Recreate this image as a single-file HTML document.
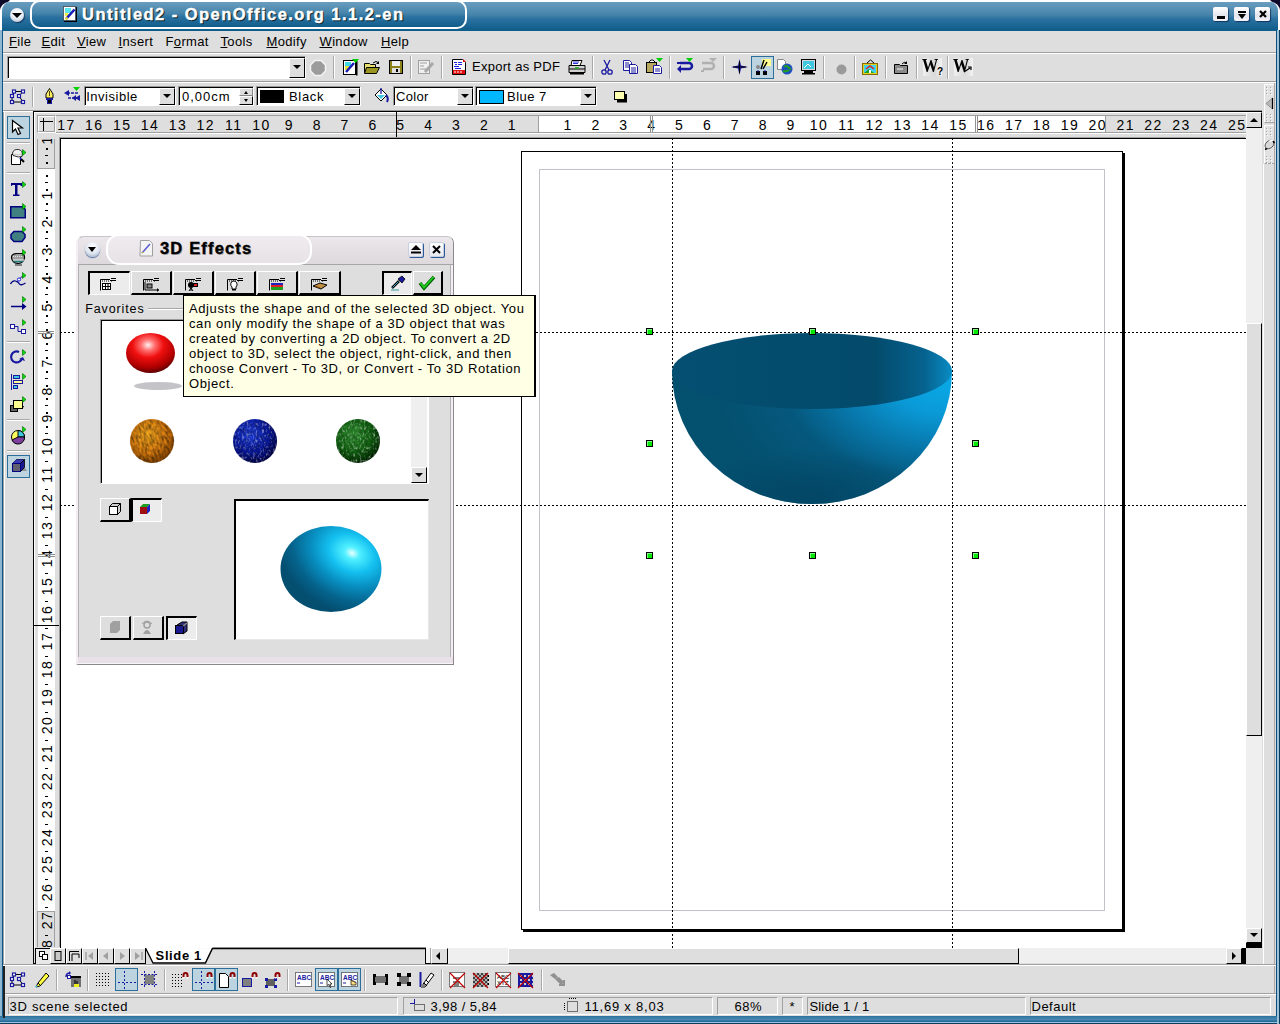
<!DOCTYPE html>
<html><head><meta charset="utf-8">
<style>
*{margin:0;padding:0;box-sizing:border-box}
html,body{width:1280px;height:1024px;overflow:hidden;background:#dedede;font-family:"Liberation Sans",sans-serif;font-size:13px;color:#000}
.a{position:absolute}
.t{position:absolute;white-space:nowrap;line-height:1}
svg{position:absolute;overflow:visible}
.sep{position:absolute;width:2px;border-left:1px solid #a9a9a9;border-right:1px solid #fff}
.combo{position:absolute;background:#fff;border-top:2px solid #000;border-left:2px solid #000;border-right:1px solid #fff;border-bottom:1px solid #fff}
.ddb{position:absolute;background:#dedede;border-top:1px solid #fff;border-left:1px solid #fff;border-right:1px solid #000;border-bottom:1px solid #000}
.ddb:after{content:"";position:absolute;left:50%;top:50%;margin-left:-5px;margin-top:-2px;border-left:5px solid transparent;border-right:5px solid transparent;border-top:5px solid #000}
.handle{position:absolute;width:7px;height:7px;background:#22c022;border:1px solid #000}
</style></head><body>
<!-- desktop corners -->
<div class="a" style="left:0;top:0;width:1280px;height:2px;background:#fff"></div>
<div class="a" style="left:0;top:0;width:10px;height:10px;background:#100a2a;clip-path:polygon(0 0,100% 0,0 100%)"></div>
<div class="a" style="left:1270px;top:0;width:10px;height:10px;background:#100a2a;clip-path:polygon(0 0,100% 0,100% 100%)"></div>
<!-- window frame -->
<div class="a" style="left:0;top:2px;width:1280px;height:1022px;background:linear-gradient(#6a9dbf,#4584ab 13px,#2a71a0 17px,#0f5d8b 28px,#0f5d8b 29px);border-radius:9px 9px 0 0;border-left:2px solid #fff;border-right:2px solid #fff"></div>
<div class="a" style="left:0;top:30px;width:3px;height:994px;background:linear-gradient(90deg,#93b9d4 0,#8ab3cf 2px,#0e5a86 2px)"></div>
<div class="a" style="left:1276px;top:30px;width:4px;height:994px;background:linear-gradient(90deg,#0d4f7a 0,#0d4f7a 1px,#9fc2db 1px,#9fc2db 3px,#0a3d5e 3px)"></div>
<div class="a" style="left:0;top:1016px;width:1277px;height:8px;background:linear-gradient(#2a6f9c,#4a8ab4 40%,#1b6494 75%,#9fc2db 75%,#9fc2db 87%,#0a3d5e 87%)"></div>
<!-- client bg -->
<div class="a" style="left:3px;top:31px;width:1273px;height:985px;background:#dedede"></div>

<!-- TITLE -->
<div id="title">
<div class="a" style="left:30px;top:0px;width:437px;height:29px;border:2px solid #fff;border-radius:10px;background:linear-gradient(#6a9dbf,#4584ab 45%,#2a71a0 60%,#0f5d8b)"></div>
<div class="a" style="left:10px;top:8px;width:14px;height:14px;border-radius:50%;background:radial-gradient(circle at 50% 35%,#fff,#e8ecf4 50%,#aeb8c8);box-shadow:1px 1px 1px rgba(0,0,40,.5)"></div>
<div class="a" style="left:12px;top:13px;width:0;height:0;border-left:5px solid transparent;border-right:5px solid transparent;border-top:5px solid #000"></div>
<svg style="left:63px;top:6px" width="14" height="16" viewBox="0 0 14 16"><rect x="0.5" y="0.5" width="12" height="14" fill="#fff" stroke="#000" stroke-dasharray="1 1"/><rect x="13" y="1" width="1" height="15" fill="#000"/><rect x="1" y="15" width="13" height="1" fill="#000"/><rect x="2" y="2" width="6" height="5" fill="#60e8f0"/><rect x="2" y="7" width="3" height="3" fill="#f0f040"/><path d="M3 13L11.5 3.5" stroke="#1a1ab8" stroke-width="2.6"/><path d="M2.5 13.5l2-2" stroke="#f0e020" stroke-width="2"/></svg>
<div class="t" style="left:83px;top:7px;font-size:16.5px;font-weight:bold;color:#000;letter-spacing:1.46px;opacity:.7;-webkit-text-stroke:0.4px #000">Untitled2 - OpenOffice.org 1.1.2-en</div>
<div class="t" style="left:82px;top:6px;font-size:16.5px;font-weight:bold;color:#fff;letter-spacing:1.46px;-webkit-text-stroke:0.4px #fff">Untitled2 - OpenOffice.org 1.1.2-en</div>
<!-- buttons -->
<div class="a" style="left:1213px;top:7px;width:15px;height:14px;border-radius:2px;background:linear-gradient(#fff,#e4e6ee 60%,#f4f4f8);box-shadow:1px 1px 1px rgba(0,20,60,.6)"></div>
<div class="a" style="left:1217px;top:16px;width:8px;height:3px;background:#000"></div>
<div class="a" style="left:1234px;top:7px;width:15px;height:14px;border-radius:2px;background:linear-gradient(#fff,#e4e6ee 60%,#f4f4f8);box-shadow:1px 1px 1px rgba(0,20,60,.6)"></div>
<div class="a" style="left:1238px;top:11px;width:8px;height:2px;background:#000"></div>
<div class="a" style="left:1238px;top:14px;width:0;height:0;border-left:4px solid transparent;border-right:4px solid transparent;border-top:5px solid #000"></div>
<div class="a" style="left:1255px;top:7px;width:15px;height:14px;border-radius:2px;background:linear-gradient(#fff,#e4e6ee 60%,#f4f4f8);box-shadow:1px 1px 1px rgba(0,20,60,.6)"></div>
<svg style="left:1259px;top:10px" width="8" height="8"><path d="M1 1L7 7M7 1L1 7" stroke="#000" stroke-width="2.2"/></svg>
</div>

<!-- MENU -->
<div id="menu">
<div class="a" style="left:3px;top:52px;width:1273px;height:1px;background:#a0a0a0"></div>
<div class="a" style="left:3px;top:53px;width:1273px;height:1px;background:#fff"></div>
<div class="t" style="left:9px;top:35px;letter-spacing:0.35px"><u>F</u>ile</div>
<div class="t" style="left:41.5px;top:35px;letter-spacing:0.35px"><u>E</u>dit</div>
<div class="t" style="left:77px;top:35px;letter-spacing:0.35px"><u>V</u>iew</div>
<div class="t" style="left:118.5px;top:35px;letter-spacing:0.35px"><u>I</u>nsert</div>
<div class="t" style="left:165.5px;top:35px;letter-spacing:0.35px">F<u>o</u>rmat</div>
<div class="t" style="left:220.5px;top:35px;letter-spacing:0.35px"><u>T</u>ools</div>
<div class="t" style="left:266.5px;top:35px;letter-spacing:0.35px"><u>M</u>odify</div>
<div class="t" style="left:319.5px;top:35px;letter-spacing:0.35px"><u>W</u>indow</div>
<div class="t" style="left:381px;top:35px;letter-spacing:0.35px"><u>H</u>elp</div>
</div>

<!-- TOOLBARS -->
<div id="tb1">
<div class="a" style="left:3px;top:81px;width:1273px;height:1px;background:#9a9a9a"></div><div class="a" style="left:3px;top:82px;width:1273px;height:1px;background:#fff"></div>
<div class="a" style="left:7px;top:56px;width:299px;height:23px;border-top:1px solid #9a9a9a;border-left:1px solid #9a9a9a;border-right:1px solid #fff;border-bottom:1px solid #fff"><div class="a" style="left:0;top:0;right:0;bottom:0;background:#fff;border-top:1px solid #000;border-left:1px solid #000"></div></div><div class="a" style="left:289px;top:58px;width:16px;height:20px;background:#dedede;border-top:1px solid #fff;border-left:1px solid #fff;border-right:1px solid #000;border-bottom:1px solid #000"></div><div class="a" style="left:293px;top:65px;width:0;height:0;border-left:4px solid transparent;border-right:4px solid transparent;border-top:4px solid #000"></div>
<svg style="left:310px;top:60px" width="16" height="16" viewBox="0 0 16 16"><path d="M5 0.5h6l4.5 4.5v6l-4.5 4.5h-6l-4.5-4.5v-6z" fill="#9c9c9c" stroke="#f4f4f4" stroke-width="1.5"/></svg>
<div class="a" style="left:333px;top:56px;width:1px;height:23px;background:#a9a9a9"></div><div class="a" style="left:334px;top:56px;width:1px;height:23px;background:#fff"></div>
<div class="a" style="left:410px;top:56px;width:1px;height:23px;background:#a9a9a9"></div><div class="a" style="left:411px;top:56px;width:1px;height:23px;background:#fff"></div>
<div class="a" style="left:441px;top:56px;width:1px;height:23px;background:#a9a9a9"></div><div class="a" style="left:442px;top:56px;width:1px;height:23px;background:#fff"></div>
<div class="a" style="left:592px;top:56px;width:1px;height:23px;background:#a9a9a9"></div><div class="a" style="left:593px;top:56px;width:1px;height:23px;background:#fff"></div>
<div class="a" style="left:669px;top:56px;width:1px;height:23px;background:#a9a9a9"></div><div class="a" style="left:670px;top:56px;width:1px;height:23px;background:#fff"></div>
<div class="a" style="left:723px;top:56px;width:1px;height:23px;background:#a9a9a9"></div><div class="a" style="left:724px;top:56px;width:1px;height:23px;background:#fff"></div>
<div class="a" style="left:823px;top:56px;width:1px;height:23px;background:#a9a9a9"></div><div class="a" style="left:824px;top:56px;width:1px;height:23px;background:#fff"></div>
<div class="a" style="left:854px;top:56px;width:1px;height:23px;background:#a9a9a9"></div><div class="a" style="left:855px;top:56px;width:1px;height:23px;background:#fff"></div>
<div class="a" style="left:885px;top:56px;width:1px;height:23px;background:#a9a9a9"></div><div class="a" style="left:886px;top:56px;width:1px;height:23px;background:#fff"></div>
<div class="a" style="left:916px;top:56px;width:1px;height:23px;background:#a9a9a9"></div><div class="a" style="left:917px;top:56px;width:1px;height:23px;background:#fff"></div>
<div class="a" style="left:947px;top:56px;width:1px;height:23px;background:#a9a9a9"></div><div class="a" style="left:948px;top:56px;width:1px;height:23px;background:#fff"></div>
<svg style="left:343px;top:59px" width="16" height="17" viewBox="0 0 16 17"><rect x="0.5" y="1.5" width="12" height="14" fill="#fff" stroke="#000"/><rect x="13" y="2" width="1.5" height="14.5" fill="#000"/><rect x="2" y="3" width="6" height="6" fill="#3fd7e8"/><rect x="2" y="7" width="4" height="4" fill="#e0e030"/><path d="M3 13L11 4" stroke="#1a1ab8" stroke-width="2.5"/><path d="M9 0h7l-3.5 4z" fill="#00d000"/></svg>
<svg style="left:364px;top:60px" width="17" height="14" viewBox="0 0 17 14"><path d="M0.5 3.5h5l1 1h5v8h-11z" fill="#e8e070" stroke="#000"/><path d="M2.5 7.5h13l-3 6h-12z" fill="#9c9420" stroke="#000"/><path d="M9 3 q3 -3 6 0" stroke="#000" fill="none"/><path d="M15 1v3h-3" fill="#000"/></svg>
<svg style="left:389px;top:60px" width="14" height="15" viewBox="0 0 14 15"><rect x="0.5" y="0.5" width="13" height="13" fill="#8c8418" stroke="#000"/><rect x="3" y="1" width="8" height="5" fill="#f0f0f0"/><rect x="3" y="8" width="8" height="5" fill="#e0e0e0"/><rect x="7" y="9" width="2" height="3" fill="#000"/></svg>
<svg style="left:418px;top:60px" width="17" height="14" viewBox="0 0 17 14"><rect x="0.5" y="0.5" width="11" height="13" fill="#f0f0f0" stroke="#a0a0a0"/><path d="M2 3h7M2 6h4M2 9h7" stroke="#a0a0a0"/><path d="M7 12L15 3" stroke="#a8a8a8" stroke-width="3"/></svg>
<svg style="left:452px;top:59px" width="15" height="16" viewBox="0 0 15 16"><path d="M0.5 0.5h10l3 3v12h-13z" fill="#fff" stroke="#000"/><path d="M11 0l3 3h-3z" fill="#d00"/><path d="M2 3.5h3M6 3.5h4M3 5.5h2M6 5.5h4M2 7.5h5M3 9.5h6" stroke="#2020e0"/><rect x="1" y="11" width="12" height="4" fill="#e01010"/><path d="M3 12v2M6 12v2M9 12v2" stroke="#fff"/></svg>
<div class="t" style="left:472px;top:60px;letter-spacing:0.28px">Export as PDF</div>
<svg style="left:568px;top:60px" width="18" height="15" viewBox="0 0 18 15"><path d="M4 0.5h10l-2 5h-9z" fill="#fff" stroke="#000"/><path d="M5 2h6M5 3.5h5" stroke="#3030e0"/><path d="M1 5.5h16v7h-16z" fill="#d0d0d0" stroke="#000"/><path d="M1 9h16" stroke="#000"/><rect x="7" y="7" width="4" height="1.5" fill="#20c020"/><rect x="2" y="12.5" width="14" height="2" fill="#000"/></svg>
<svg style="left:601px;top:60px" width="12" height="15" viewBox="0 0 12 15"><path d="M3 0L8 10M9 0L4 10" stroke="#1a1aa0" stroke-width="1.3"/><circle cx="3" cy="12" r="2.2" fill="none" stroke="#1a1aa0" stroke-width="1.3"/><circle cx="9" cy="12" r="2.2" fill="none" stroke="#1a1aa0" stroke-width="1.3"/></svg>
<svg style="left:623px;top:60px" width="16" height="14" viewBox="0 0 16 14"><path d="M0.5 0.5h6l2 2v8h-8z" fill="#fff" stroke="#1a1aa0"/><path d="M2 3h4M2 5h4M2 7h4" stroke="#1a1aa0"/><path d="M6.5 4.5h6l2 2v7h-8z" fill="#fff" stroke="#1a1aa0"/><path d="M8 8h5M8 10h5M8 12h5" stroke="#1a1aa0"/></svg>
<svg style="left:646px;top:58px" width="18" height="16" viewBox="0 0 18 16"><rect x="0.5" y="4.5" width="10" height="10" fill="#b8a860" stroke="#000"/><path d="M3 4l2-2h2l2 2" fill="#fff" stroke="#000"/><path d="M7.5 7.5h6l2 2v6h-8z" fill="#fff" stroke="#1a1aa0"/><path d="M9 11h5M9 13h5" stroke="#1a1aa0"/><path d="M10 0h7l-3.5 4z" fill="#00d000"/></svg>
<svg style="left:677px;top:58px" width="18" height="15" viewBox="0 0 18 15"><path d="M3 5h9a3 3 0 0 1 0 6h-8" stroke="#1a1aa0" stroke-width="2.5" fill="none"/><path d="M4 7l-4 4l4 4z" fill="#1a1aa0"/><path d="M0 5h9" stroke="#1a1aa0" stroke-width="2"/><path d="M9 0h7l-3.5 4z" fill="#00d000"/></svg>
<svg style="left:700px;top:58px" width="18" height="15" viewBox="0 0 18 15"><path d="M2 5h9a3 3 0 0 1 0 6h-8" stroke="#b0b0b0" stroke-width="2.5" fill="none"/><path d="M4 13h-3" stroke="#b0b0b0" stroke-width="2"/><path d="M9 0h8l-4 4z" fill="#b0b0b0"/></svg>
<svg style="left:731px;top:59px" width="17" height="16" viewBox="0 0 17 16"><path d="M8.5 0L10 6.5L17 8L10 9.5L8.5 16L7 9.5L0 8L7 6.5z" fill="#1a1aa0"/><path d="M8.5 2v12M2 8h13" stroke="#000"/></svg>
<div class="a" style="left:751px;top:56px;width:23px;height:23px;background:#bcd3e0;border:1px solid #2d6f9b"></div>
<svg style="left:754px;top:59px" width="18" height="17" viewBox="0 0 18 17"><rect x="8" y="0" width="9" height="7" fill="#ffff90"/><path d="M10 1l-3 9M13 3l-4 7" stroke="#000" stroke-width="1.5"/><circle cx="4" cy="8" r="2" fill="#888"/><rect x="2" y="12" width="4" height="4" fill="#000"/><rect x="9" y="12" width="4" height="4" fill="#000"/><path d="M3 12h2M10 12h2" stroke="#1a1aa0"/></svg>
<svg style="left:777px;top:59px" width="16" height="16" viewBox="0 0 16 16"><path d="M0.5 0.5h6l2 2v8h-8z" fill="#fff" stroke="#888"/><circle cx="10" cy="10" r="5.5" fill="#2050c0"/><path d="M7 8q2 -2 4 0t3 2M6 12q3 1 6 -1" stroke="#20a020" stroke-width="2" fill="none"/></svg>
<svg style="left:801px;top:59px" width="15" height="16" viewBox="0 0 15 16"><rect x="0.5" y="0.5" width="14" height="11" fill="#d8d8d8" stroke="#000"/><rect x="2" y="2" width="11" height="8" fill="#40c8e0"/><path d="M3 9l4 -4l3 3" stroke="#fff" fill="none"/><rect x="3" y="12" width="9" height="2" fill="#000"/><rect x="1" y="14" width="13" height="1.5" fill="#000"/></svg>
<svg style="left:836px;top:64px" width="11" height="11" viewBox="0 0 11 11"><circle cx="5.5" cy="5.5" r="5" fill="#9a9a9a"/></svg>
<svg style="left:862px;top:59px" width="17" height="16" viewBox="0 0 17 16"><path d="M5 4l3.5-3l3.5 3" stroke="#000" fill="none"/><rect x="0.5" y="4.5" width="15" height="11" fill="#e0d020" stroke="#8a6a00"/><rect x="2" y="6" width="12" height="8" fill="#40d0f0"/><path d="M2 14l5-4l5 4" fill="#20a020"/><path d="M4 10l4-3l4 3" stroke="#e02020" stroke-width="1.5" fill="none"/><rect x="7" y="11" width="2" height="3" fill="#fff"/></svg>
<svg style="left:894px;top:60px" width="15" height="14" viewBox="0 0 15 14"><path d="M0.5 4.5h5l1 1h7v8h-13z" fill="#8a8a8a" stroke="#000"/><path d="M3 9h6" stroke="#fff"/><path d="M8 4q2-3 5-1" stroke="#000" fill="none"/><path d="M13 1v3h-3" fill="#000"/></svg>
<div class="a" style="left:923px;top:58px;width:19px;height:18px;background:linear-gradient(90deg,#f0f0f0,#d8d8d8 60%,#f4f4f4)"></div>
<div class="t" style="left:922px;top:57px;font-family:'Liberation Serif',serif;font-weight:bold;font-size:18px;transform:scaleX(0.9);transform-origin:0 0">W</div><div class="t" style="left:937px;top:67px;font-size:10px;font-weight:bold">?</div>
<div class="a" style="left:954px;top:58px;width:19px;height:18px;background:linear-gradient(90deg,#f0f0f0,#d8d8d8 60%,#f4f4f4)"></div>
<div class="t" style="left:953px;top:57px;font-family:'Liberation Serif',serif;font-weight:bold;font-size:18px;transform:scaleX(0.9);transform-origin:0 0">W</div>
<svg style="left:964px;top:66px" width="8" height="7" viewBox="0 0 8 7"><path d="M0 6l6-4M4 1h3v3" stroke="#000" stroke-width="1.2" fill="none"/></svg>
</div>
<div id="tb2">
<div class="a" style="left:3px;top:110px;width:1273px;height:1px;background:#9a9a9a"></div>
<svg style="left:10px;top:90px" width="16" height="14" viewBox="0 0 16 14"><path d="M4 1.5h9M2.5 6L4 2M13 1.5L9 6L13 12M2 6v6h11" stroke="#000" fill="none"/><rect x="2.5" y="0.0" width="3" height="3" fill="#fff" stroke="#1a1aa0" stroke-width="1.2"/><rect x="11.5" y="0.0" width="3" height="3" fill="#fff" stroke="#1a1aa0" stroke-width="1.2"/><rect x="0.5" y="4.5" width="3" height="3" fill="#fff" stroke="#1a1aa0" stroke-width="1.2"/><rect x="7.5" y="4.5" width="3" height="3" fill="#fff" stroke="#1a1aa0" stroke-width="1.2"/><rect x="0.5" y="10.5" width="3" height="3" fill="#fff" stroke="#1a1aa0" stroke-width="1.2"/><rect x="11.5" y="10.5" width="3" height="3" fill="#fff" stroke="#1a1aa0" stroke-width="1.2"/></svg>
<div class="a" style="left:32px;top:87px;width:1px;height:20px;background:#a9a9a9"></div><div class="a" style="left:33px;top:87px;width:1px;height:20px;background:#fff"></div>
<svg style="left:45px;top:88px" width="9" height="17" viewBox="0 0 9 17"><path d="M4.5 0.5L8 6v4h-7v-4z" fill="#ffef60" stroke="#000"/><path d="M4.5 3v5" stroke="#000" stroke-width=".7"/><rect x="1" y="10" width="7" height="2" fill="#1a1aa0"/><rect x="2" y="12" width="5" height="4" fill="#1a1aa0"/><rect x="3" y="12" width="3" height="3" fill="#000"/></svg>
<svg style="left:64px;top:87px" width="17" height="15" viewBox="0 0 17 15"><path d="M3 6h12M4 11h11" stroke="#1a1aa0" stroke-width="1.5" stroke-dasharray="3 1"/><path d="M0 6l5-3v6z" fill="#1a1aa0"/><path d="M11 11l5-3v6zM8 11l4-3v6z" fill="#1a1aa0"/><path d="M9 0h7l-3.5 4z" fill="#00d000"/></svg>
<div class="a" style="left:84px;top:86px;width:92px;height:20px;border-top:1px solid #9a9a9a;border-left:1px solid #9a9a9a;border-right:1px solid #fff;border-bottom:1px solid #fff"><div class="a" style="left:0;top:0;right:0;bottom:0;background:#fff;border-top:1px solid #000;border-left:1px solid #000"></div></div><div class="a" style="left:159px;top:88px;width:16px;height:17px;background:#dedede;border-top:1px solid #fff;border-left:1px solid #fff;border-right:1px solid #000;border-bottom:1px solid #000"></div><div class="a" style="left:163px;top:94px;width:0;height:0;border-left:4px solid transparent;border-right:4px solid transparent;border-top:4px solid #000"></div>
<div class="t" style="left:86.2px;top:90px;letter-spacing:0.52px">Invisible</div>
<div class="a" style="left:178px;top:86px;width:76px;height:20px;border-top:1px solid #9a9a9a;border-left:1px solid #9a9a9a;border-right:1px solid #fff;border-bottom:1px solid #fff"><div class="a" style="left:0;top:0;right:0;bottom:0;background:#fff;border-top:1px solid #000;border-left:1px solid #000"></div></div><div class="a" style="left:239px;top:88px;width:14px;height:8px;background:#dedede;border-top:1px solid #fff;border-left:1px solid #fff;border-right:1px solid #888;border-bottom:1px solid #888"></div><div class="a" style="left:239px;top:96px;width:14px;height:9px;background:#dedede;border-top:1px solid #fff;border-left:1px solid #fff;border-right:1px solid #000;border-bottom:1px solid #000"></div><div class="a" style="left:244px;top:91px;width:0;height:0;border-left:2.5px solid transparent;border-right:2.5px solid transparent;border-bottom:3px solid #000"></div><div class="a" style="left:244px;top:99px;width:0;height:0;border-left:2.5px solid transparent;border-right:2.5px solid transparent;border-top:3px solid #000"></div>
<div class="t" style="left:182px;top:90px;letter-spacing:1.0px">0,00cm</div>
<div class="a" style="left:256px;top:86px;width:105px;height:20px;border-top:1px solid #9a9a9a;border-left:1px solid #9a9a9a;border-right:1px solid #fff;border-bottom:1px solid #fff"><div class="a" style="left:0;top:0;right:0;bottom:0;background:#fff;border-top:1px solid #000;border-left:1px solid #000"></div></div><div class="a" style="left:344px;top:88px;width:16px;height:17px;background:#dedede;border-top:1px solid #fff;border-left:1px solid #fff;border-right:1px solid #000;border-bottom:1px solid #000"></div><div class="a" style="left:348px;top:94px;width:0;height:0;border-left:4px solid transparent;border-right:4px solid transparent;border-top:4px solid #000"></div>
<div class="a" style="left:260px;top:90px;width:24px;height:13px;background:#000"></div>
<div class="t" style="left:289px;top:90px;letter-spacing:0.68px">Black</div>
<svg style="left:374px;top:88px" width="15" height="15" viewBox="0 0 15 15"><path d="M1 7l6-6l6 6l-6 6z" fill="#fff" stroke="#000"/><path d="M3 7l4 4l4-4z" fill="#40c8e0"/><path d="M7 6V0" stroke="#1a1aa0" stroke-width="1.3"/><path d="M12 7q3 3 1 7" stroke="#1a1aa0" stroke-width="2" fill="none"/></svg>
<div class="a" style="left:393px;top:86px;width:81px;height:20px;border-top:1px solid #9a9a9a;border-left:1px solid #9a9a9a;border-right:1px solid #fff;border-bottom:1px solid #fff"><div class="a" style="left:0;top:0;right:0;bottom:0;background:#fff;border-top:1px solid #000;border-left:1px solid #000"></div></div><div class="a" style="left:457px;top:88px;width:16px;height:17px;background:#dedede;border-top:1px solid #fff;border-left:1px solid #fff;border-right:1px solid #000;border-bottom:1px solid #000"></div><div class="a" style="left:461px;top:94px;width:0;height:0;border-left:4px solid transparent;border-right:4px solid transparent;border-top:4px solid #000"></div>
<div class="t" style="left:396px;top:90px;letter-spacing:0.32px">Color</div>
<div class="a" style="left:475px;top:86px;width:122px;height:20px;border-top:1px solid #9a9a9a;border-left:1px solid #9a9a9a;border-right:1px solid #fff;border-bottom:1px solid #fff"><div class="a" style="left:0;top:0;right:0;bottom:0;background:#fff;border-top:1px solid #000;border-left:1px solid #000"></div></div><div class="a" style="left:580px;top:88px;width:16px;height:17px;background:#dedede;border-top:1px solid #fff;border-left:1px solid #fff;border-right:1px solid #000;border-bottom:1px solid #000"></div><div class="a" style="left:584px;top:94px;width:0;height:0;border-left:4px solid transparent;border-right:4px solid transparent;border-top:4px solid #000"></div>
<div class="a" style="left:479px;top:90px;width:25px;height:14px;background:#00b8ff;border:1px solid #000"></div>
<div class="t" style="left:507px;top:90px;letter-spacing:0.47px">Blue 7</div>
<svg style="left:614px;top:91px" width="14" height="12" viewBox="0 0 14 12"><rect x="3" y="3" width="10" height="8.5" fill="#000"/><rect x="0.5" y="0.5" width="10" height="8" fill="#ffffb0" stroke="#000"/></svg>
</div>

<!-- LEFT TOOLBAR -->
<div id="ltb">
<div class="a" style="left:3px;top:111px;width:30px;height:853px;background:#dedede;border-left:1px solid #a0a0a0;box-shadow:inset 1px 0 0 #fff"></div>
<div class="a" style="left:3px;top:111px;width:30px;height:1px;background:#fff"></div>
<div class="a" style="left:7px;top:116px;width:23px;height:23px;background:#bcd3e0;border:1px solid #2d6f9b"></div>
<svg style="left:11px;top:119px" width="14" height="17" viewBox="0 0 14 17"><path d="M1.5 1.5V13L4.5 10L7 15.5L9.5 14.5L7 9H11.5z" fill="#fff" stroke="#000" stroke-width="1.2"/></svg>
<div class="a" style="left:7px;top:142px;width:23px;height:1px;background:#a9a9a9"></div><div class="a" style="left:7px;top:143px;width:23px;height:1px;background:#fff"></div>
<svg style="left:10px;top:149px" width="17" height="18" viewBox="0 0 17 18"><path d="M1.5 5.5h9v10h-9z" fill="#fff" stroke="#000"/><path d="M2.5 4 q1 -4 6 -3.5 q5 1 3.5 7 q-3 1.5 -9 -1z" fill="#f0f0f0" stroke="#000" stroke-width=".8"/><path d="M4 5q4 2 8 0" stroke="#c0c0c0" fill="none"/><path d="M11 10l3 3" stroke="#000" stroke-width="2"/><circle cx="10.5" cy="9.5" r="1" fill="#2020e0"/><path d="M12.5 0.5l3.5 3l-3.5 3z" fill="#00e000" stroke="#006000" stroke-width=".6"/></svg>
<div class="a" style="left:7px;top:172px;width:23px;height:1px;background:#a9a9a9"></div><div class="a" style="left:7px;top:173px;width:23px;height:1px;background:#fff"></div>
<svg style="left:10px;top:181px" width="17" height="16" viewBox="0 0 17 16"><path d="M1 2h11v3h-1l-1-1h-2.5v9.5h2v1.5h-6.5v-1.5h2v-9.5h-2.5l-1 1h-.5z" fill="#000080"/><path d="M12.5 0.5l3.5 3l-3.5 3z" fill="#00e000" stroke="#006000" stroke-width=".6"/></svg>
<svg style="left:10px;top:203px" width="18" height="16" viewBox="0 0 18 16"><path d="M0.75 3.75h11.5l3 2.5v8.5h-14.5z" fill="#408080" stroke="#000080" stroke-width="1.5"/><path d="M12.5 0.5l3.5 3l-3.5 3z" fill="#00e000" stroke="#006000" stroke-width=".6"/></svg>
<svg style="left:10px;top:226px" width="18" height="17" viewBox="0 0 18 17"><path d="M4 5.5h8l3 3v3l-3 4h-8l-3-3v-4z" fill="#408080" stroke="#000080" stroke-width="1.5"/><path d="M12.5 0.5l3.5 3l-3.5 3z" fill="#00e000" stroke="#006000" stroke-width=".6"/></svg>
<svg style="left:10px;top:249px" width="18" height="18" viewBox="0 0 18 18"><path d="M1.5 8q0-3 5-3.5h6q2 1 2 3.5v1q-1 5-6 5.5h-1q-5-.5-6-5.5z" fill="#a0a0a0" stroke="#000" stroke-width="1.2"/><path d="M3 7.5h10" stroke="#e0e0e0" stroke-dasharray="1 1"/><path d="M3 11h11" stroke="#e8e8e8" stroke-width="1.2"/><path d="M3.5 12.5h9.5" stroke="#208080" stroke-width="1.5"/><path d="M5 16h7" stroke="#606060" stroke-width="1.5"/><path d="M12.5 0.5l3.5 3l-3.5 3z" fill="#00e000" stroke="#006000" stroke-width=".6"/></svg>
<svg style="left:10px;top:272px" width="18" height="17" viewBox="0 0 18 17"><path d="M0.5 12q2-4 5-3t4 3t6-1" stroke="#000080" stroke-width="1.3" fill="none"/><path d="M6.5 10l6-6" stroke="#000080"/><circle cx="9" cy="7.5" r="1.6" fill="#fff" stroke="#2020e0"/><path d="M12.5 0.5l3.5 3l-3.5 3z" fill="#00e000" stroke="#006000" stroke-width=".6"/></svg>
<svg style="left:10px;top:296px" width="18" height="16" viewBox="0 0 18 16"><path d="M1 10.5h12" stroke="#000080" stroke-width="1.5"/><path d="M12 7l4.5 3.5l-4.5 3.5z" fill="#000080"/><path d="M12.5 0.5l3.5 3l-3.5 3z" fill="#00e000" stroke="#006000" stroke-width=".6"/></svg>
<svg style="left:10px;top:319px" width="18" height="15" viewBox="0 0 18 15"><rect x="0.5" y="5.5" width="4" height="4" fill="#fff" stroke="#1a1aa0"/><rect x="11.5" y="10.5" width="4" height="4" fill="#fff" stroke="#1a1aa0"/><path d="M5 7.5h3v5h3.5" stroke="#1a1aa0" fill="none"/><path d="M12.5 0.5l3.5 3l-3.5 3z" fill="#00e000" stroke="#006000" stroke-width=".6"/></svg>
<div class="a" style="left:7px;top:341px;width:23px;height:1px;background:#a9a9a9"></div><div class="a" style="left:7px;top:342px;width:23px;height:1px;background:#fff"></div>
<svg style="left:10px;top:349px" width="18" height="16" viewBox="0 0 18 16"><path d="M12 9a5.5 5.5 0 1 1 -3 -6" stroke="#1a1aa0" stroke-width="2.2" fill="none"/><path d="M9 10l4-2l2 4z" fill="#1a1aa0"/><path d="M12.5 0.5l3.5 3l-3.5 3z" fill="#00e000" stroke="#006000" stroke-width=".6"/></svg>
<svg style="left:10px;top:373px" width="18" height="17" viewBox="0 0 18 17"><path d="M1.5 1v16" stroke="#1a1aa0"/><rect x="3.5" y="2.5" width="6" height="3" fill="#40c8e0" stroke="#1a1aa0"/><rect x="3.5" y="7.5" width="9" height="3" fill="#ffff90" stroke="#1a1aa0"/><rect x="3.5" y="12.5" width="4" height="3" fill="#40c8e0" stroke="#1a1aa0"/><path d="M12.5 0.5l3.5 3l-3.5 3z" fill="#00e000" stroke="#006000" stroke-width=".6"/></svg>
<svg style="left:10px;top:396px" width="18" height="17" viewBox="0 0 18 17"><rect x="0.5" y="9.5" width="7" height="6" fill="#606060" stroke="#000"/><rect x="3.5" y="4.5" width="9" height="8" fill="#ffff90" stroke="#000"/><path d="M12 10l2 1" stroke="#000"/><path d="M12.5 0.5l3.5 3l-3.5 3z" fill="#00e000" stroke="#006000" stroke-width=".6"/></svg>
<div class="a" style="left:7px;top:419px;width:23px;height:1px;background:#a9a9a9"></div><div class="a" style="left:7px;top:420px;width:23px;height:1px;background:#fff"></div>
<svg style="left:10px;top:426px" width="18" height="18" viewBox="0 0 18 18"><circle cx="8" cy="11" r="6.5" fill="#ffff60" stroke="#000"/><path d="M8 11V4.5A6.5 6.5 0 0 1 14.5 11z" fill="#40c8e0" stroke="#000"/><path d="M8 11H14.5A6.5 6.5 0 0 1 2 14z" fill="#8040a0" stroke="#000"/><path d="M12.5 0.5l3.5 3l-3.5 3z" fill="#00e000" stroke="#006000" stroke-width=".6"/></svg>
<div class="a" style="left:7px;top:450px;width:23px;height:1px;background:#a9a9a9"></div><div class="a" style="left:7px;top:451px;width:23px;height:1px;background:#fff"></div>
<div class="a" style="left:7px;top:455px;width:23px;height:23px;background:#bcd3e0;border:1px solid #2d6f9b"></div>
<svg style="left:10px;top:457px" width="18" height="18" viewBox="0 0 18 18"><path d="M6 14h11l-2-3z" fill="#909090"/><path d="M2.5 6.5l4-4h8v8l-4 4" fill="#1a1a90" stroke="#000" stroke-width=".8"/><path d="M2.5 6.5l4-4h8l-4 4z" fill="#3a3ab0"/><rect x="2.5" y="6.5" width="8" height="8" fill="#606070" stroke="#000080"/><path d="M10.5 6.5l4-4" stroke="#000"/></svg>
</div>

<!-- CANVAS -->
<div id="canvas">
<div class="a" style="left:33px;top:111px;width:1229px;height:854px;border-top:1px solid #000;border-left:1px solid #000;background:#dedede"></div>
<div class="a" style="left:34px;top:112px;width:1212px;height:1px;background:#fff"></div>
<div class="a" style="left:34px;top:112px;width:1px;height:852px;background:#fff"></div>
<div class="a" style="left:37px;top:115px;width:19px;height:18px;border-top:1px solid #a0a0a0;border-left:1px solid #a0a0a0;border-right:1px solid #fff;border-bottom:1px solid #fff"><div class="a" style="left:0;top:0;right:0;bottom:0;border-top:1px solid #fff;border-left:1px solid #fff;border-right:1px solid #a0a0a0;border-bottom:1px solid #a0a0a0"></div></div>
<svg style="left:40px;top:118px" width="14" height="14" viewBox="0 0 14 14"><path d="M3.5 0v13M0 3.5h13" stroke="#000" stroke-width="1"/></svg>
<div class="a" style="left:56px;top:115px;width:1190px;height:1px;background:#a0a0a0"></div>
<div class="a" style="left:56px;top:132px;width:1190px;height:1px;background:#a0a0a0"></div>
<div class="a" style="left:56px;top:133px;width:1190px;height:1px;background:#fff"></div>
<div class="a" style="left:539px;top:116px;width:566px;height:16px;background:#fff"></div>
<div class="a" style="left:538px;top:116px;width:1px;height:16px;background:#a0a0a0"></div>
<div class="a" style="left:1105px;top:116px;width:1px;height:16px;background:#a0a0a0"></div>
<div class="t" style="left:492.42px;top:117.5px;width:40px;text-align:center;font-size:14px;letter-spacing:1.4px">1</div>
<div class="t" style="left:464.55px;top:117.5px;width:40px;text-align:center;font-size:14px;letter-spacing:1.4px">2</div>
<div class="t" style="left:436.68px;top:117.5px;width:40px;text-align:center;font-size:14px;letter-spacing:1.4px">3</div>
<div class="t" style="left:408.80px;top:117.5px;width:40px;text-align:center;font-size:14px;letter-spacing:1.4px">4</div>
<div class="t" style="left:380.92px;top:117.5px;width:40px;text-align:center;font-size:14px;letter-spacing:1.4px">5</div>
<div class="t" style="left:353.05px;top:117.5px;width:40px;text-align:center;font-size:14px;letter-spacing:1.4px">6</div>
<div class="t" style="left:325.18px;top:117.5px;width:40px;text-align:center;font-size:14px;letter-spacing:1.4px">7</div>
<div class="t" style="left:297.30px;top:117.5px;width:40px;text-align:center;font-size:14px;letter-spacing:1.4px">8</div>
<div class="t" style="left:269.42px;top:117.5px;width:40px;text-align:center;font-size:14px;letter-spacing:1.4px">9</div>
<div class="t" style="left:241.55px;top:117.5px;width:40px;text-align:center;font-size:14px;letter-spacing:1.4px">10</div>
<div class="t" style="left:213.68px;top:117.5px;width:40px;text-align:center;font-size:14px;letter-spacing:1.4px">11</div>
<div class="t" style="left:185.80px;top:117.5px;width:40px;text-align:center;font-size:14px;letter-spacing:1.4px">12</div>
<div class="t" style="left:157.92px;top:117.5px;width:40px;text-align:center;font-size:14px;letter-spacing:1.4px">13</div>
<div class="t" style="left:130.05px;top:117.5px;width:40px;text-align:center;font-size:14px;letter-spacing:1.4px">14</div>
<div class="t" style="left:102.18px;top:117.5px;width:40px;text-align:center;font-size:14px;letter-spacing:1.4px">15</div>
<div class="t" style="left:74.30px;top:117.5px;width:40px;text-align:center;font-size:14px;letter-spacing:1.4px">16</div>
<div class="t" style="left:46.42px;top:117.5px;width:40px;text-align:center;font-size:14px;letter-spacing:1.4px">17</div>
<div class="t" style="left:548.18px;top:117.5px;width:40px;text-align:center;font-size:14px;letter-spacing:1.4px">1</div>
<div class="t" style="left:576.05px;top:117.5px;width:40px;text-align:center;font-size:14px;letter-spacing:1.4px">2</div>
<div class="t" style="left:603.92px;top:117.5px;width:40px;text-align:center;font-size:14px;letter-spacing:1.4px">3</div>
<div class="t" style="left:631.80px;top:117.5px;width:40px;text-align:center;font-size:14px;letter-spacing:1.4px">4</div>
<div class="t" style="left:659.68px;top:117.5px;width:40px;text-align:center;font-size:14px;letter-spacing:1.4px">5</div>
<div class="t" style="left:687.55px;top:117.5px;width:40px;text-align:center;font-size:14px;letter-spacing:1.4px">6</div>
<div class="t" style="left:715.42px;top:117.5px;width:40px;text-align:center;font-size:14px;letter-spacing:1.4px">7</div>
<div class="t" style="left:743.30px;top:117.5px;width:40px;text-align:center;font-size:14px;letter-spacing:1.4px">8</div>
<div class="t" style="left:771.18px;top:117.5px;width:40px;text-align:center;font-size:14px;letter-spacing:1.4px">9</div>
<div class="t" style="left:799.05px;top:117.5px;width:40px;text-align:center;font-size:14px;letter-spacing:1.4px">10</div>
<div class="t" style="left:826.92px;top:117.5px;width:40px;text-align:center;font-size:14px;letter-spacing:1.4px">11</div>
<div class="t" style="left:854.80px;top:117.5px;width:40px;text-align:center;font-size:14px;letter-spacing:1.4px">12</div>
<div class="t" style="left:882.68px;top:117.5px;width:40px;text-align:center;font-size:14px;letter-spacing:1.4px">13</div>
<div class="t" style="left:910.55px;top:117.5px;width:40px;text-align:center;font-size:14px;letter-spacing:1.4px">14</div>
<div class="t" style="left:938.42px;top:117.5px;width:40px;text-align:center;font-size:14px;letter-spacing:1.4px">15</div>
<div class="t" style="left:966.30px;top:117.5px;width:40px;text-align:center;font-size:14px;letter-spacing:1.4px">16</div>
<div class="t" style="left:994.18px;top:117.5px;width:40px;text-align:center;font-size:14px;letter-spacing:1.4px">17</div>
<div class="t" style="left:1022.05px;top:117.5px;width:40px;text-align:center;font-size:14px;letter-spacing:1.4px">18</div>
<div class="t" style="left:1049.92px;top:117.5px;width:40px;text-align:center;font-size:14px;letter-spacing:1.4px">19</div>
<div class="t" style="left:1077.80px;top:117.5px;width:40px;text-align:center;font-size:14px;letter-spacing:1.4px">20</div>
<div class="t" style="left:1105.68px;top:117.5px;width:40px;text-align:center;font-size:14px;letter-spacing:1.4px">21</div>
<div class="t" style="left:1133.55px;top:117.5px;width:40px;text-align:center;font-size:14px;letter-spacing:1.4px">22</div>
<div class="t" style="left:1161.42px;top:117.5px;width:40px;text-align:center;font-size:14px;letter-spacing:1.4px">23</div>
<div class="t" style="left:1189.30px;top:117.5px;width:40px;text-align:center;font-size:14px;letter-spacing:1.4px">24</div>
<div class="t" style="left:1217.18px;top:117.5px;width:40px;text-align:center;font-size:14px;letter-spacing:1.4px">25</div>
<div class="a" style="left:396px;top:111px;width:1px;height:27px;background:#000"></div>
<div class="a" style="left:650px;top:116px;width:1px;height:16px;background:#909090"></div>
<div class="a" style="left:652px;top:116px;width:1px;height:16px;background:#909090"></div>
<div class="a" style="left:975px;top:116px;width:1px;height:16px;background:#909090"></div>
<div class="a" style="left:977px;top:116px;width:1px;height:16px;background:#909090"></div>
<div class="a" style="left:37px;top:139px;width:1px;height:30px;background:#a0a0a0"></div><div class="a" style="left:37px;top:911px;width:1px;height:36px;background:#a0a0a0"></div>
<div class="a" style="left:54px;top:139px;width:1px;height:30px;background:#a0a0a0"></div><div class="a" style="left:54px;top:911px;width:1px;height:36px;background:#a0a0a0"></div>
<div class="a" style="left:38px;top:169px;width:17px;height:742px;background:#fff"></div>
<div class="a" style="left:38px;top:168px;width:16px;height:1px;background:#a0a0a0"></div>
<div class="a" style="left:38px;top:911px;width:16px;height:1px;background:#a0a0a0"></div>
<div class="a" style="left:38px;top:139px;width:16px;height:808px;overflow:hidden">
<div class="a" style="left:8px;top:9px;width:1.5px;height:1.5px;background:#000"></div>
<div class="a" style="left:7px;top:16px;width:3px;height:1px;background:#000"></div>
<div class="a" style="left:8px;top:23px;width:1.5px;height:1.5px;background:#000"></div>
<div class="a" style="left:8px;top:36px;width:1.5px;height:1.5px;background:#000"></div>
<div class="a" style="left:7px;top:43px;width:3px;height:1px;background:#000"></div>
<div class="a" style="left:8px;top:50px;width:1.5px;height:1.5px;background:#000"></div>
<div class="a" style="left:8px;top:64px;width:1.5px;height:1.5px;background:#000"></div>
<div class="a" style="left:7px;top:71px;width:3px;height:1px;background:#000"></div>
<div class="a" style="left:8px;top:78px;width:1.5px;height:1.5px;background:#000"></div>
<div class="a" style="left:8px;top:92px;width:1.5px;height:1.5px;background:#000"></div>
<div class="a" style="left:7px;top:99px;width:3px;height:1px;background:#000"></div>
<div class="a" style="left:8px;top:106px;width:1.5px;height:1.5px;background:#000"></div>
<div class="a" style="left:8px;top:120px;width:1.5px;height:1.5px;background:#000"></div>
<div class="a" style="left:7px;top:127px;width:3px;height:1px;background:#000"></div>
<div class="a" style="left:8px;top:134px;width:1.5px;height:1.5px;background:#000"></div>
<div class="a" style="left:8px;top:148px;width:1.5px;height:1.5px;background:#000"></div>
<div class="a" style="left:7px;top:155px;width:3px;height:1px;background:#000"></div>
<div class="a" style="left:8px;top:162px;width:1.5px;height:1.5px;background:#000"></div>
<div class="a" style="left:8px;top:176px;width:1.5px;height:1.5px;background:#000"></div>
<div class="a" style="left:7px;top:183px;width:3px;height:1px;background:#000"></div>
<div class="a" style="left:8px;top:190px;width:1.5px;height:1.5px;background:#000"></div>
<div class="a" style="left:8px;top:204px;width:1.5px;height:1.5px;background:#000"></div>
<div class="a" style="left:7px;top:211px;width:3px;height:1px;background:#000"></div>
<div class="a" style="left:8px;top:218px;width:1.5px;height:1.5px;background:#000"></div>
<div class="a" style="left:8px;top:232px;width:1.5px;height:1.5px;background:#000"></div>
<div class="a" style="left:7px;top:239px;width:3px;height:1px;background:#000"></div>
<div class="a" style="left:8px;top:246px;width:1.5px;height:1.5px;background:#000"></div>
<div class="a" style="left:8px;top:259px;width:1.5px;height:1.5px;background:#000"></div>
<div class="a" style="left:7px;top:266px;width:3px;height:1px;background:#000"></div>
<div class="a" style="left:8px;top:273px;width:1.5px;height:1.5px;background:#000"></div>
<div class="a" style="left:8px;top:287px;width:1.5px;height:1.5px;background:#000"></div>
<div class="a" style="left:7px;top:294px;width:3px;height:1px;background:#000"></div>
<div class="a" style="left:7px;top:322px;width:3px;height:1px;background:#000"></div>
<div class="a" style="left:7px;top:350px;width:3px;height:1px;background:#000"></div>
<div class="a" style="left:7px;top:378px;width:3px;height:1px;background:#000"></div>
<div class="a" style="left:7px;top:406px;width:3px;height:1px;background:#000"></div>
<div class="a" style="left:7px;top:434px;width:3px;height:1px;background:#000"></div>
<div class="a" style="left:7px;top:462px;width:3px;height:1px;background:#000"></div>
<div class="a" style="left:7px;top:489px;width:3px;height:1px;background:#000"></div>
<div class="a" style="left:7px;top:517px;width:3px;height:1px;background:#000"></div>
<div class="a" style="left:7px;top:545px;width:3px;height:1px;background:#000"></div>
<div class="a" style="left:7px;top:573px;width:3px;height:1px;background:#000"></div>
<div class="a" style="left:7px;top:601px;width:3px;height:1px;background:#000"></div>
<div class="a" style="left:7px;top:629px;width:3px;height:1px;background:#000"></div>
<div class="a" style="left:7px;top:657px;width:3px;height:1px;background:#000"></div>
<div class="a" style="left:7px;top:685px;width:3px;height:1px;background:#000"></div>
<div class="a" style="left:7px;top:712px;width:3px;height:1px;background:#000"></div>
<div class="a" style="left:7px;top:740px;width:3px;height:1px;background:#000"></div>
<div class="a" style="left:7px;top:768px;width:3px;height:1px;background:#000"></div>
<div class="a" style="left:7px;top:796px;width:3px;height:1px;background:#000"></div>
<div class="a" style="left:7px;top:824px;width:3px;height:1px;background:#000"></div>
<div class="t" style="left:-11px;top:-7.38px;width:40px;height:16px;line-height:16px;text-align:center;font-size:14px;letter-spacing:1.4px;transform:rotate(-90deg)">1</div>
<div class="t" style="left:-11px;top:48.38px;width:40px;height:16px;line-height:16px;text-align:center;font-size:14px;letter-spacing:1.4px;transform:rotate(-90deg)">1</div>
<div class="t" style="left:-11px;top:76.25px;width:40px;height:16px;line-height:16px;text-align:center;font-size:14px;letter-spacing:1.4px;transform:rotate(-90deg)">2</div>
<div class="t" style="left:-11px;top:104.12px;width:40px;height:16px;line-height:16px;text-align:center;font-size:14px;letter-spacing:1.4px;transform:rotate(-90deg)">3</div>
<div class="t" style="left:-11px;top:132.00px;width:40px;height:16px;line-height:16px;text-align:center;font-size:14px;letter-spacing:1.4px;transform:rotate(-90deg)">4</div>
<div class="t" style="left:-11px;top:159.88px;width:40px;height:16px;line-height:16px;text-align:center;font-size:14px;letter-spacing:1.4px;transform:rotate(-90deg)">5</div>
<div class="t" style="left:-11px;top:187.75px;width:40px;height:16px;line-height:16px;text-align:center;font-size:14px;letter-spacing:1.4px;transform:rotate(-90deg)">6</div>
<div class="t" style="left:-11px;top:215.62px;width:40px;height:16px;line-height:16px;text-align:center;font-size:14px;letter-spacing:1.4px;transform:rotate(-90deg)">7</div>
<div class="t" style="left:-11px;top:243.50px;width:40px;height:16px;line-height:16px;text-align:center;font-size:14px;letter-spacing:1.4px;transform:rotate(-90deg)">8</div>
<div class="t" style="left:-11px;top:271.38px;width:40px;height:16px;line-height:16px;text-align:center;font-size:14px;letter-spacing:1.4px;transform:rotate(-90deg)">9</div>
<div class="t" style="left:-11px;top:299.25px;width:40px;height:16px;line-height:16px;text-align:center;font-size:14px;letter-spacing:1.4px;transform:rotate(-90deg)">10</div>
<div class="t" style="left:-11px;top:327.12px;width:40px;height:16px;line-height:16px;text-align:center;font-size:14px;letter-spacing:1.4px;transform:rotate(-90deg)">11</div>
<div class="t" style="left:-11px;top:355.00px;width:40px;height:16px;line-height:16px;text-align:center;font-size:14px;letter-spacing:1.4px;transform:rotate(-90deg)">12</div>
<div class="t" style="left:-11px;top:382.88px;width:40px;height:16px;line-height:16px;text-align:center;font-size:14px;letter-spacing:1.4px;transform:rotate(-90deg)">13</div>
<div class="t" style="left:-11px;top:410.75px;width:40px;height:16px;line-height:16px;text-align:center;font-size:14px;letter-spacing:1.4px;transform:rotate(-90deg)">14</div>
<div class="t" style="left:-11px;top:438.62px;width:40px;height:16px;line-height:16px;text-align:center;font-size:14px;letter-spacing:1.4px;transform:rotate(-90deg)">15</div>
<div class="t" style="left:-11px;top:466.50px;width:40px;height:16px;line-height:16px;text-align:center;font-size:14px;letter-spacing:1.4px;transform:rotate(-90deg)">16</div>
<div class="t" style="left:-11px;top:494.38px;width:40px;height:16px;line-height:16px;text-align:center;font-size:14px;letter-spacing:1.4px;transform:rotate(-90deg)">17</div>
<div class="t" style="left:-11px;top:522.25px;width:40px;height:16px;line-height:16px;text-align:center;font-size:14px;letter-spacing:1.4px;transform:rotate(-90deg)">18</div>
<div class="t" style="left:-11px;top:550.12px;width:40px;height:16px;line-height:16px;text-align:center;font-size:14px;letter-spacing:1.4px;transform:rotate(-90deg)">19</div>
<div class="t" style="left:-11px;top:578.00px;width:40px;height:16px;line-height:16px;text-align:center;font-size:14px;letter-spacing:1.4px;transform:rotate(-90deg)">20</div>
<div class="t" style="left:-11px;top:605.88px;width:40px;height:16px;line-height:16px;text-align:center;font-size:14px;letter-spacing:1.4px;transform:rotate(-90deg)">21</div>
<div class="t" style="left:-11px;top:633.75px;width:40px;height:16px;line-height:16px;text-align:center;font-size:14px;letter-spacing:1.4px;transform:rotate(-90deg)">22</div>
<div class="t" style="left:-11px;top:661.62px;width:40px;height:16px;line-height:16px;text-align:center;font-size:14px;letter-spacing:1.4px;transform:rotate(-90deg)">23</div>
<div class="t" style="left:-11px;top:689.50px;width:40px;height:16px;line-height:16px;text-align:center;font-size:14px;letter-spacing:1.4px;transform:rotate(-90deg)">24</div>
<div class="t" style="left:-11px;top:717.38px;width:40px;height:16px;line-height:16px;text-align:center;font-size:14px;letter-spacing:1.4px;transform:rotate(-90deg)">25</div>
<div class="t" style="left:-11px;top:745.25px;width:40px;height:16px;line-height:16px;text-align:center;font-size:14px;letter-spacing:1.4px;transform:rotate(-90deg)">26</div>
<div class="t" style="left:-11px;top:773.12px;width:40px;height:16px;line-height:16px;text-align:center;font-size:14px;letter-spacing:1.4px;transform:rotate(-90deg)">27</div>
<div class="t" style="left:-11px;top:801.00px;width:40px;height:16px;line-height:16px;text-align:center;font-size:14px;letter-spacing:1.4px;transform:rotate(-90deg)">28</div>
</div>
<div class="a" style="left:38px;top:331px;width:16px;height:1px;background:#909090"></div>
<div class="a" style="left:38px;top:333px;width:16px;height:1px;background:#909090"></div><div class="a" style="left:38px;top:554px;width:17px;height:1px;background:#909090"></div><div class="a" style="left:38px;top:556px;width:17px;height:1px;background:#909090"></div><div class="a" style="left:33px;top:625px;width:27px;height:1px;background:#000"></div>
<div class="a" style="left:60px;top:138px;width:1186px;height:810px;background:#fff;border-top:1px solid #000;border-left:1px solid #000;box-shadow:-1px -1px 0 #a0a0a0"></div>
<div class="a" style="left:521px;top:151px;width:602px;height:779px;border:1px solid #000;box-shadow:2px 2px 0 #000"></div>
<div class="a" style="left:539px;top:169px;width:566px;height:742px;border:1px solid #c4c0c8"></div>
<svg style="left:60px;top:138px" width="1186" height="810" viewBox="0 0 1186 810"><path d="M612.5 0V810M892.5 0V810" stroke="#000" stroke-dasharray="2 2"/><path d="M0 194.5H1186M0 367.5H1186" stroke="#000" stroke-dasharray="2 2"/></svg>
<svg style="left:660px;top:320px" width="304" height="200" viewBox="0 0 304 200">
<defs>
<radialGradient id="bd" gradientUnits="userSpaceOnUse" cx="285" cy="62" r="230" gradientTransform="translate(285 62) scale(1 0.62) translate(-285 -62)"><stop offset="0" stop-color="#0aa8e6"/><stop offset="0.22" stop-color="#0a9ad8"/><stop offset="0.45" stop-color="#0879ad"/><stop offset="0.7" stop-color="#05587d"/><stop offset="1" stop-color="#04506f"/></radialGradient>
<radialGradient id="bb" gradientUnits="userSpaceOnUse" cx="150" cy="175" r="90" gradientTransform="translate(150 175) scale(1.3 0.5) rotate(15) translate(-150 -175)"><stop offset="0" stop-color="#034463" stop-opacity="0.85"/><stop offset="1" stop-color="#034463" stop-opacity="0"/></radialGradient>
<linearGradient id="bi" x1="0" y1="0" x2="1" y2="0"><stop offset="0" stop-color="#044f72"/><stop offset="0.72" stop-color="#034a6b"/><stop offset="0.9" stop-color="#05628e"/><stop offset="1" stop-color="#0a8cc4"/></linearGradient>
</defs>
<path d="M12 51 A140 133 0 0 0 292 51 Z" fill="url(#bd)"/>
<path d="M12 51 A140 133 0 0 0 292 51 Z" fill="url(#bb)"/>
<ellipse cx="152" cy="51" rx="140" ry="38" fill="url(#bi)"/>
</svg>
<div class="a" style="left:646px;top:328px;width:7px;height:7px;background:#000"><div class="a" style="left:1px;top:1px;width:5px;height:5px;background:#00e800;box-shadow:inset 1px 1px 0 #80ff80"></div></div>
<div class="a" style="left:646px;top:440px;width:7px;height:7px;background:#000"><div class="a" style="left:1px;top:1px;width:5px;height:5px;background:#00e800;box-shadow:inset 1px 1px 0 #80ff80"></div></div>
<div class="a" style="left:646px;top:552px;width:7px;height:7px;background:#000"><div class="a" style="left:1px;top:1px;width:5px;height:5px;background:#00e800;box-shadow:inset 1px 1px 0 #80ff80"></div></div>
<div class="a" style="left:809px;top:328px;width:7px;height:7px;background:#000"><div class="a" style="left:1px;top:1px;width:5px;height:5px;background:#00e800;box-shadow:inset 1px 1px 0 #80ff80"></div></div>
<div class="a" style="left:809px;top:552px;width:7px;height:7px;background:#000"><div class="a" style="left:1px;top:1px;width:5px;height:5px;background:#00e800;box-shadow:inset 1px 1px 0 #80ff80"></div></div>
<div class="a" style="left:972px;top:328px;width:7px;height:7px;background:#000"><div class="a" style="left:1px;top:1px;width:5px;height:5px;background:#00e800;box-shadow:inset 1px 1px 0 #80ff80"></div></div>
<div class="a" style="left:972px;top:440px;width:7px;height:7px;background:#000"><div class="a" style="left:1px;top:1px;width:5px;height:5px;background:#00e800;box-shadow:inset 1px 1px 0 #80ff80"></div></div>
<div class="a" style="left:972px;top:552px;width:7px;height:7px;background:#000"><div class="a" style="left:1px;top:1px;width:5px;height:5px;background:#00e800;box-shadow:inset 1px 1px 0 #80ff80"></div></div>
<div class="a" style="left:1246px;top:112px;width:16px;height:836px;background:#efefef"></div>
<div class="a" style="left:1246px;top:112px;width:16px;height:16px;background:#dedede;border-top:1px solid #fff;border-left:1px solid #fff;border-right:1px solid #000;border-bottom:1px solid #000"></div>
<div class="a" style="left:1250px;top:118px;width:0;height:0;border-left:4px solid transparent;border-right:4px solid transparent;border-bottom:4px solid #000"></div>
<div class="a" style="left:1246px;top:323px;width:16px;height:413px;background:#dedede;border-top:1px solid #fff;border-left:1px solid #fff;border-right:1px solid #000;border-bottom:1px solid #000"></div>
<div class="a" style="left:1246px;top:928px;width:16px;height:15px;background:#dedede;border-top:1px solid #fff;border-left:1px solid #fff;border-right:1px solid #000;border-bottom:1px solid #000"></div>
<div class="a" style="left:1250px;top:933px;width:0;height:0;border-left:4px solid transparent;border-right:4px solid transparent;border-top:4px solid #000"></div>
<div class="a" style="left:1246px;top:943px;width:16px;height:5px;background:#000"></div>

<div class="a" style="left:34px;top:948px;width:1212px;height:16px;background:#dedede"></div>
<div class="a" style="left:34px;top:963px;width:112px;height:1px;background:#000"></div><div class="a" style="left:34px;top:964px;width:1229px;height:1px;background:#fff"></div>
<div class="a" style="left:1241px;top:948px;width:5px;height:16px;background:#000"></div>
<div class="a" style="left:1246px;top:948px;width:16px;height:16px;background:#dedede"></div>
<div class="a" style="left:35px;top:948px;width:15px;height:16px;background:#e8e8e8;border-top:1px solid #000;border-left:1px solid #000"></div>
<div class="a" style="left:50px;top:948px;width:16px;height:16px;background:#dedede;border-top:1px solid #fff;border-left:1px solid #fff;border-right:1px solid #000;border-bottom:1px solid #000"></div>
<div class="a" style="left:66px;top:948px;width:16px;height:16px;background:#dedede;border-top:1px solid #fff;border-left:1px solid #fff;border-right:1px solid #000;border-bottom:1px solid #000"></div>
<div class="a" style="left:82px;top:948px;width:16px;height:16px;background:#dedede;border-top:1px solid #fff;border-left:1px solid #fff;border-right:1px solid #000;border-bottom:1px solid #000"></div>
<div class="a" style="left:98px;top:948px;width:16px;height:16px;background:#dedede;border-top:1px solid #fff;border-left:1px solid #fff;border-right:1px solid #000;border-bottom:1px solid #000"></div>
<div class="a" style="left:114px;top:948px;width:16px;height:16px;background:#dedede;border-top:1px solid #fff;border-left:1px solid #fff;border-right:1px solid #000;border-bottom:1px solid #000"></div>
<div class="a" style="left:130px;top:948px;width:16px;height:16px;background:#dedede;border-top:1px solid #fff;border-left:1px solid #fff;border-right:1px solid #000;border-bottom:1px solid #000"></div>
<svg style="left:39px;top:951px" width="11" height="11" viewBox="0 0 11 11"><rect x="0.5" y="0.5" width="5" height="5" fill="#fff" stroke="#000"/><rect x="3.5" y="3.5" width="5" height="5" fill="#fff" stroke="#000"/></svg>
<svg style="left:54px;top:951px" width="9" height="11" viewBox="0 0 9 11"><rect x="1" y="0.5" width="6" height="9" fill="#c8c8c8" stroke="#000"/></svg>
<svg style="left:69px;top:951px" width="11" height="11" viewBox="0 0 11 11"><path d="M0.5 10V0.5H10M3 10V3H10V7" stroke="#000" fill="none"/></svg>
<svg style="left:85px;top:951px" width="10" height="10" viewBox="0 0 10 10"><path d="M1 1v8" stroke="#a0a0a0" stroke-width="1.5"/><path d="M8 1L3 5L8 9z" fill="#a0a0a0"/></svg>
<svg style="left:101px;top:951px" width="10" height="10" viewBox="0 0 10 10"><path d="M7 1L2 5L7 9z" fill="#a0a0a0"/></svg>
<svg style="left:117px;top:951px" width="10" height="10" viewBox="0 0 10 10"><path d="M3 1L8 5L3 9z" fill="#a0a0a0"/></svg>
<svg style="left:133px;top:951px" width="10" height="10" viewBox="0 0 10 10"><path d="M2 1L7 5L2 9z" fill="#a0a0a0"/><path d="M9 1v8" stroke="#a0a0a0" stroke-width="1.5"/></svg>
<svg style="left:145px;top:947px" width="282" height="17" viewBox="0 0 282 17"><path d="M0.5 1 L8 16 H60.5 L67.5 1.5 H281" fill="#fff" stroke="#000" stroke-width="1.3"/><path d="M67.5 1.5H281V16H60.5z" fill="#dedede"/><path d="M67.5 1.5H281" stroke="#000" stroke-width="1.3"/><path d="M60.5 16L67.5 1.5" stroke="#000" stroke-width="1.3"/></svg>
<div class="t" style="left:155.6px;top:949px;font-size:13px;font-weight:bold;letter-spacing:0.62px">Slide 1</div>
<div class="a" style="left:425px;top:948px;width:7px;height:16px;background:#f4f4f4;border-left:1px solid #000;border-right:1px solid #000;border-bottom:1px solid #000;box-shadow:inset -1px 0 0 #a0a0a0"></div>
<div class="a" style="left:431px;top:948px;width:795px;height:15px;background:#efefef"></div>
<div class="a" style="left:431px;top:948px;width:17px;height:16px;background:#dedede;border-top:1px solid #fff;border-left:1px solid #fff;border-right:1px solid #000;border-bottom:1px solid #000"></div>
<div class="a" style="left:436px;top:952px;width:0;height:0;border-top:4px solid transparent;border-bottom:4px solid transparent;border-right:4px solid #000"></div>
<div class="a" style="left:508px;top:948px;width:511px;height:16px;background:#dedede;border-top:1px solid #fff;border-left:1px solid #fff;border-right:1px solid #000;border-bottom:1px solid #000"></div>
<div class="a" style="left:1226px;top:948px;width:16px;height:16px;background:#dedede;border-top:1px solid #fff;border-left:1px solid #fff;border-right:1px solid #000;border-bottom:1px solid #000"></div>
<div class="a" style="left:1232px;top:952px;width:0;height:0;border-top:4px solid transparent;border-bottom:4px solid transparent;border-left:4px solid #000"></div>
<div class="a" style="left:1262px;top:83px;width:14px;height:910px;background:#dedede"></div>
<div class="a" style="left:1263px;top:164px;width:1px;height:800px;background:#fff"></div>
<div class="a" style="left:1274px;top:83px;width:1px;height:910px;background:#a8a8a8"></div>
<div class="a" style="left:1264px;top:84px;width:10px;height:39px;background:#e2e2e2;border-left:1px solid #fff;border-top:1px solid #fff;border-bottom:1px solid #a0a0a0"></div>
<div class="a" style="left:1264px;top:125px;width:10px;height:39px;background:#e2e2e2;border-left:1px solid #fff;border-top:1px solid #fff;border-bottom:1px solid #a0a0a0"></div>
<svg style="left:1265px;top:86px" width="8" height="8" viewBox="0 0 8 8"><rect x="1" y="1" width="1" height="1" fill="#a8a8a8"/><rect x="2" y="2" width="1" height="1" fill="#fff"/><rect x="1" y="4" width="1" height="1" fill="#a8a8a8"/><rect x="2" y="5" width="1" height="1" fill="#fff"/><rect x="1" y="7" width="1" height="1" fill="#a8a8a8"/><rect x="2" y="8" width="1" height="1" fill="#fff"/><rect x="5" y="1" width="1" height="1" fill="#a8a8a8"/><rect x="6" y="2" width="1" height="1" fill="#fff"/><rect x="5" y="4" width="1" height="1" fill="#a8a8a8"/><rect x="6" y="5" width="1" height="1" fill="#fff"/><rect x="5" y="7" width="1" height="1" fill="#a8a8a8"/><rect x="6" y="8" width="1" height="1" fill="#fff"/></svg>
<svg style="left:1265px;top:113px" width="8" height="8" viewBox="0 0 8 8"><rect x="1" y="1" width="1" height="1" fill="#a8a8a8"/><rect x="2" y="2" width="1" height="1" fill="#fff"/><rect x="1" y="4" width="1" height="1" fill="#a8a8a8"/><rect x="2" y="5" width="1" height="1" fill="#fff"/><rect x="1" y="7" width="1" height="1" fill="#a8a8a8"/><rect x="2" y="8" width="1" height="1" fill="#fff"/><rect x="5" y="1" width="1" height="1" fill="#a8a8a8"/><rect x="6" y="2" width="1" height="1" fill="#fff"/><rect x="5" y="4" width="1" height="1" fill="#a8a8a8"/><rect x="6" y="5" width="1" height="1" fill="#fff"/><rect x="5" y="7" width="1" height="1" fill="#a8a8a8"/><rect x="6" y="8" width="1" height="1" fill="#fff"/></svg>
<svg style="left:1265px;top:127px" width="8" height="8" viewBox="0 0 8 8"><rect x="1" y="1" width="1" height="1" fill="#a8a8a8"/><rect x="2" y="2" width="1" height="1" fill="#fff"/><rect x="1" y="4" width="1" height="1" fill="#a8a8a8"/><rect x="2" y="5" width="1" height="1" fill="#fff"/><rect x="1" y="7" width="1" height="1" fill="#a8a8a8"/><rect x="2" y="8" width="1" height="1" fill="#fff"/><rect x="5" y="1" width="1" height="1" fill="#a8a8a8"/><rect x="6" y="2" width="1" height="1" fill="#fff"/><rect x="5" y="4" width="1" height="1" fill="#a8a8a8"/><rect x="6" y="5" width="1" height="1" fill="#fff"/><rect x="5" y="7" width="1" height="1" fill="#a8a8a8"/><rect x="6" y="8" width="1" height="1" fill="#fff"/></svg>
<svg style="left:1265px;top:155px" width="8" height="8" viewBox="0 0 8 8"><rect x="1" y="1" width="1" height="1" fill="#a8a8a8"/><rect x="2" y="2" width="1" height="1" fill="#fff"/><rect x="1" y="4" width="1" height="1" fill="#a8a8a8"/><rect x="2" y="5" width="1" height="1" fill="#fff"/><rect x="1" y="7" width="1" height="1" fill="#a8a8a8"/><rect x="2" y="8" width="1" height="1" fill="#fff"/><rect x="5" y="1" width="1" height="1" fill="#a8a8a8"/><rect x="6" y="2" width="1" height="1" fill="#fff"/><rect x="5" y="4" width="1" height="1" fill="#a8a8a8"/><rect x="6" y="5" width="1" height="1" fill="#fff"/><rect x="5" y="7" width="1" height="1" fill="#a8a8a8"/><rect x="6" y="8" width="1" height="1" fill="#fff"/></svg>
<svg style="left:1265px;top:97px" width="9" height="13" viewBox="0 0 9 13"><path d="M7.5 1L1 6.5L7.5 12z" fill="#b8b8b8" stroke="#808080" stroke-width=".8"/><path d="M7.5 1V12" stroke="#000" stroke-width="1.2"/></svg>
<svg style="left:1264px;top:138px" width="11" height="13" viewBox="0 0 11 13"><ellipse cx="5.5" cy="6.5" rx="5" ry="3.6" transform="rotate(-40 5.5 6.5)" fill="#d8d8d8" stroke="#404040" stroke-width=".8"/><path d="M5 3.5q3-2 5 0" stroke="#fff" stroke-width="1.5" fill="none"/><path d="M1 11.5l2-1" stroke="#000" stroke-width="1.5"/><path d="M9 3l1.5 2" stroke="#000" stroke-width="1.5"/></svg>
</div>

<!-- DIALOG -->
<div id="dlg">
<div class="a" style="left:76px;top:236px;width:378px;height:429px;background:#dedede;border-radius:7px 7px 0 0;border-top:1px solid #c8c4c8;border-left:2px solid #f4eef4;border-right:1px solid #8c888c;border-bottom:1px solid #8c888c;box-shadow:inset 1px 0 0 #b0b0b0"></div>
<div class="a" style="left:78px;top:237px;width:375px;height:28px;border-radius:6px 6px 0 0;background:linear-gradient(#ebe7eb,#dcd8dc)"></div>
<div class="a" style="left:78px;top:264px;width:375px;height:1px;background:#a8a4a8"></div>
<div class="a" style="left:106px;top:234px;width:206px;height:31px;border-radius:13px;border:2px solid #fff;background:linear-gradient(#efebef,#e6e2e6)"></div>
<div class="a" style="left:85px;top:242px;width:15px;height:15px;border-radius:50%;background:radial-gradient(circle at 50% 30%,#fff,#dfe6f0 55%,#8aa0c0);box-shadow:0 1px 1px #4a6aa0"></div>
<div class="a" style="left:88px;top:247px;width:0;height:0;border-left:4.5px solid transparent;border-right:4.5px solid transparent;border-top:5px solid #000"></div>
<svg style="left:140px;top:240px" width="14" height="17" viewBox="0 0 14 17"><path d="M0.5 0.5h9l3 3v12.5h-12.5z" fill="#f4f4f4" stroke="#a0a0a0"/><path d="M2 13L10 4" stroke="#5a5ad0" stroke-width="1.5"/><path d="M2 13l1.5-1" stroke="#d0c040" stroke-width="1.5"/></svg>
<div class="t" style="left:161px;top:241px;font-size:16.5px;font-weight:bold;letter-spacing:1.16px;color:#777;opacity:.5">3D Effects</div>
<div class="t" style="left:160px;top:240px;font-size:16.5px;font-weight:bold;letter-spacing:1.16px;-webkit-text-stroke:0.35px #000">3D Effects</div>
<div class="a" style="left:408px;top:242px;width:15px;height:15px;border-radius:2px;background:linear-gradient(#fff,#e8e8f0);border:1px solid #c8d0e0;box-shadow:1px 1px 0 #2a5a9a"></div>
<div class="a" style="left:429px;top:242px;width:15px;height:15px;border-radius:2px;background:linear-gradient(#fff,#e8e8f0);border:1px solid #c8d0e0;box-shadow:1px 1px 0 #2a5a9a"></div>
<svg style="left:411px;top:245px" width="10" height="9" viewBox="0 0 10 9"><path d="M5 0L10 5H0z" fill="#000"/><rect x="0" y="6.5" width="10" height="2" fill="#000"/></svg>
<svg style="left:432px;top:245px" width="9" height="9" viewBox="0 0 9 9"><path d="M1 1L8 8M8 1L1 8" stroke="#000" stroke-width="2"/></svg>
<div class="a" style="left:88px;top:271px;width:42px;height:24px;background:#ececec;border-top:2px solid #000;border-left:2px solid #000;border-right:1px solid #fff;border-bottom:1px solid #fff"></div>
<div class="a" style="left:131px;top:271px;width:41px;height:24px;background:#dedede;border-top:1px solid #fff;border-left:1px solid #fff;border-right:2px solid #000;border-bottom:2px solid #000"></div>
<div class="a" style="left:173px;top:271px;width:41px;height:24px;background:#dedede;border-top:1px solid #fff;border-left:1px solid #fff;border-right:2px solid #000;border-bottom:2px solid #000"></div>
<div class="a" style="left:215px;top:271px;width:41px;height:24px;background:#dedede;border-top:1px solid #fff;border-left:1px solid #fff;border-right:2px solid #000;border-bottom:2px solid #000"></div>
<div class="a" style="left:257px;top:271px;width:41px;height:24px;background:#dedede;border-top:1px solid #fff;border-left:1px solid #fff;border-right:2px solid #000;border-bottom:2px solid #000"></div>
<div class="a" style="left:299px;top:271px;width:42px;height:24px;background:#dedede;border-top:1px solid #fff;border-left:1px solid #fff;border-right:2px solid #000;border-bottom:2px solid #000"></div>
<svg style="left:100px;top:277px" width="18" height="14" viewBox="0 0 18 14"><path d="M0.5 13.5V2.5h9l2 2" fill="none" stroke="#000"/><path d="M1 2.5h9" stroke="#000"/><path d="M2 4h7" stroke="#000" stroke-dasharray="1 1"/><path d="M11 3.5h5M11 1.5h5" stroke="#000"/><rect x="2.5" y="6.5" width="8" height="6" fill="#fff" stroke="#000"/><path d="M2.5 9.5h8M5.5 6.5v6M8 6.5v6" stroke="#000"/></svg>
<svg style="left:143px;top:277px" width="18" height="14" viewBox="0 0 18 14"><path d="M0.5 13.5V2.5h9l2 2" fill="none" stroke="#000"/><path d="M1 2.5h9" stroke="#000"/><path d="M2 4h7" stroke="#000" stroke-dasharray="1 1"/><path d="M11 3.5h5M11 1.5h5" stroke="#000"/><rect x="4" y="7" width="5" height="4" fill="#888" stroke="#000"/><path d="M2 5v8h14" stroke="#000" fill="none"/><path d="M14 11l2 2l-2 2" fill="#000"/></svg>
<svg style="left:185px;top:277px" width="18" height="14" viewBox="0 0 18 14"><path d="M0.5 13.5V2.5h9l2 2" fill="none" stroke="#000"/><path d="M1 2.5h9" stroke="#000"/><path d="M2 4h7" stroke="#000" stroke-dasharray="1 1"/><path d="M11 3.5h5M11 1.5h5" stroke="#000"/><circle cx="6" cy="8" r="3" fill="#000"/><rect x="8" y="6" width="5" height="4" fill="#000"/><rect x="9" y="7" width="3" height="2" fill="#e02020"/><path d="M6 11l-2 3M6 11l2 3M6 11v3" stroke="#000"/></svg>
<svg style="left:227px;top:277px" width="18" height="14" viewBox="0 0 18 14"><path d="M0.5 13.5V2.5h9l2 2" fill="none" stroke="#000"/><path d="M1 2.5h9" stroke="#000"/><path d="M2 4h7" stroke="#000" stroke-dasharray="1 1"/><path d="M11 3.5h5M11 1.5h5" stroke="#000"/><path d="M6 4a3.5 3.5 0 0 1 3 6v2h-4v-2a3.5 3.5 0 0 1 1-6z" fill="#fff" stroke="#000"/><rect x="5" y="12" width="4" height="1.5" fill="#000"/></svg>
<svg style="left:269px;top:277px" width="18" height="14" viewBox="0 0 18 14"><path d="M0.5 13.5V2.5h9l2 2" fill="none" stroke="#000"/><path d="M1 2.5h9" stroke="#000"/><path d="M2 4h7" stroke="#000" stroke-dasharray="1 1"/><path d="M11 3.5h5M11 1.5h5" stroke="#000"/><rect x="2" y="6" width="12" height="7" fill="#2020c0"/><rect x="2" y="8" width="12" height="3" fill="#e02020"/><rect x="2" y="10" width="12" height="3" fill="#20a020"/></svg>
<svg style="left:311px;top:277px" width="18" height="14" viewBox="0 0 18 14"><path d="M0.5 13.5V2.5h9l2 2" fill="none" stroke="#000"/><path d="M1 2.5h9" stroke="#000"/><path d="M2 4h7" stroke="#000" stroke-dasharray="1 1"/><path d="M11 3.5h5M11 1.5h5" stroke="#000"/><path d="M2 9l7-3l7 2l-6 4z" fill="#c09040" stroke="#000"/><path d="M4 9l5 2" stroke="#804000"/></svg>
<div class="a" style="left:382px;top:271px;width:30px;height:24px;background:#ebebeb;border-top:2px solid #000;border-left:2px solid #000;border-right:1px solid #fff;border-bottom:1px solid #fff"></div>
<div class="a" style="left:413px;top:271px;width:30px;height:24px;background:#dedede;border-top:1px solid #fff;border-left:1px solid #fff;border-right:2px solid #000;border-bottom:2px solid #000"></div>
<svg style="left:390px;top:275px" width="15" height="16" viewBox="0 0 15 16"><path d="M2 13L9 6" stroke="#000" stroke-width="2.5"/><path d="M2.5 12.5L8.5 6.5" stroke="#40a0c0" stroke-width="1"/><path d="M8 4l4-3l3 3l-3 4z" fill="#1a1aa0" stroke="#000" stroke-width=".8"/><path d="M1 15h8" stroke="#30a0a0"/></svg>
<svg style="left:419px;top:275px" width="17" height="15" viewBox="0 0 17 15"><path d="M1 8l4 5l10-11" stroke="#006000" stroke-width="3.5" fill="none"/><path d="M1.5 8l3.5 4.5l9.5-10.5" stroke="#20d020" stroke-width="1.8" fill="none"/></svg>
<div class="t" style="left:85.3px;top:303px;font-size:12.5px;letter-spacing:0.87px">Favorites</div>
<div class="a" style="left:148px;top:308px;width:300px;height:1px;background:#a8a8a8"></div>
<div class="a" style="left:148px;top:309px;width:300px;height:1px;background:#fff"></div>
<div class="a" style="left:100px;top:319px;width:329px;height:165px;border-top:1px solid #9a9a9a;border-left:1px solid #9a9a9a;border-right:1px solid #fff;border-bottom:1px solid #fff"><div class="a" style="left:0;top:0;right:0;bottom:0;background:#fff;border-top:1px solid #000;border-left:1px solid #000"></div></div>
<div class="a" style="left:411px;top:321px;width:16px;height:162px;background:#efefef"></div>
<div class="a" style="left:411px;top:467px;width:16px;height:16px;background:#dedede;border-top:1px solid #fff;border-left:1px solid #fff;border-right:1px solid #000;border-bottom:1px solid #000"></div>
<div class="a" style="left:415px;top:473px;width:0;height:0;border-left:4px solid transparent;border-right:4px solid transparent;border-top:4px solid #000"></div>
<svg style="left:100px;top:320px" width="330" height="165" viewBox="0 0 330 165">
<defs>
<radialGradient id="rs" cx="0.45" cy="0.3" r="0.7"><stop offset="0" stop-color="#fff0f0"/><stop offset="0.2" stop-color="#ff7070"/><stop offset="0.45" stop-color="#f01010"/><stop offset="0.8" stop-color="#b00000"/><stop offset="1" stop-color="#600000"/></radialGradient>
<radialGradient id="os" cx="0.4" cy="0.35" r="0.7"><stop offset="0" stop-color="#ffb020"/><stop offset="0.6" stop-color="#e08010"/><stop offset="1" stop-color="#804000"/></radialGradient>
<radialGradient id="us" cx="0.4" cy="0.35" r="0.7"><stop offset="0" stop-color="#2040e0"/><stop offset="0.6" stop-color="#0818a0"/><stop offset="1" stop-color="#000040"/></radialGradient>
<radialGradient id="gs" cx="0.4" cy="0.35" r="0.7"><stop offset="0" stop-color="#309030"/><stop offset="0.6" stop-color="#106010"/><stop offset="1" stop-color="#002000"/></radialGradient>
<filter id="nz" x="0" y="0" width="100%" height="100%"><feTurbulence type="fractalNoise" baseFrequency="0.5 0.2" numOctaves="2" seed="3" result="n"/><feColorMatrix in="n" type="matrix" values="0 0 0 0 0  0 0 0 0 0  0 0 0 0 0  0 0 0 -1.6 1.1" result="a"/><feComposite in="a" in2="SourceGraphic" operator="in"/></filter><filter id="nz2" x="0" y="0" width="100%" height="100%"><feTurbulence type="fractalNoise" baseFrequency="0.45 0.3" numOctaves="2" seed="7" result="n"/><feColorMatrix in="n" type="matrix" values="0 0 0 0 1  0 0 0 0 1  0 0 0 0 1  0 0 0 -2 1.0" result="a"/><feComposite in="a" in2="SourceGraphic" operator="in"/></filter>
</defs>
<ellipse cx="58" cy="66" rx="24" ry="4" fill="#c4c4c8"/>
<ellipse cx="50.5" cy="33" rx="24.5" ry="20" fill="url(#rs)"/>
<circle cx="52" cy="121" r="22" fill="url(#os)"/><circle cx="52" cy="121" r="22" fill="#000" filter="url(#nz)" opacity=".7" transform="rotate(-20 52 121)"/>
<circle cx="155" cy="121" r="22" fill="url(#us)"/><circle cx="155" cy="121" r="22" fill="#000" filter="url(#nz)" opacity=".5" transform="rotate(-25 155 121)"/><circle cx="155" cy="121" r="22" fill="#fff" filter="url(#nz2)" opacity=".6"/>
<circle cx="258" cy="121" r="22" fill="url(#gs)"/><circle cx="258" cy="121" r="22" fill="#000" filter="url(#nz2)" opacity=".0"/><circle cx="258" cy="121" r="22" fill="#fff" filter="url(#nz2)" opacity=".7"/><circle cx="258" cy="121" r="22" fill="#000" filter="url(#nz)" opacity=".35"/>
</svg>
<div class="a" style="left:100px;top:498px;width:31px;height:24px;background:#dedede;border-top:1px solid #fff;border-left:1px solid #fff;border-right:2px solid #000;border-bottom:2px solid #000"></div>
<div class="a" style="left:131px;top:498px;width:31px;height:24px;background:#ececec;border-top:2px solid #000;border-left:2px solid #000;border-right:1px solid #fff;border-bottom:1px solid #fff"></div>
<svg style="left:106px;top:502px" width="17" height="15" viewBox="0 0 17 15"><path d="M3.5 4.5l3-3h8v8l-3 3" fill="#d0d0d0" stroke="#000"/><rect x="3.5" y="4.5" width="8" height="8" fill="#fff" stroke="#000"/><path d="M11.5 4.5l3-3" stroke="#000"/></svg>
<svg style="left:139px;top:503px" width="14" height="12" viewBox="0 0 14 12"><rect x="1" y="4" width="7" height="7" fill="#a01010"/><path d="M1 4l3-3h7l-3 3z" fill="#20a020"/><path d="M8 4l3-3v7l-3 3z" fill="#2020c0"/></svg>
<div class="a" style="left:100px;top:616px;width:31px;height:24px;background:#dedede;border-top:1px solid #fff;border-left:1px solid #fff;border-right:2px solid #000;border-bottom:2px solid #000"></div>
<div class="a" style="left:133px;top:616px;width:31px;height:24px;background:#dedede;border-top:1px solid #fff;border-left:1px solid #fff;border-right:2px solid #000;border-bottom:2px solid #000"></div>
<div class="a" style="left:166px;top:616px;width:31px;height:24px;background:#ececec;border-top:2px solid #000;border-left:2px solid #000;border-right:1px solid #fff;border-bottom:1px solid #fff"></div>
<svg style="left:108px;top:620px" width="14" height="15" viewBox="0 0 14 15"><path d="M2 4l3-3h7v9l-3 3h-7z" fill="#a0a0a0"/></svg>
<svg style="left:140px;top:620px" width="15" height="16" viewBox="0 0 15 16"><circle cx="7" cy="5" r="3" fill="none" stroke="#a0a0a0" stroke-width="1.5"/><path d="M3 14q4-8 8 0z" fill="#a0a0a0"/><path d="M2 4q5-6 10 0" stroke="#a0a0a0" fill="none"/></svg>
<svg style="left:173px;top:620px" width="16" height="15" viewBox="0 0 16 15"><path d="M4 5l5-3h5v9l-4 3" fill="#30307a" stroke="#000"/><rect x="2.5" y="5.5" width="8" height="8" fill="#1a1a90" stroke="#000"/><path d="M10 6l4-3" stroke="#888" stroke-width="1.5"/></svg>
<div class="a" style="left:234px;top:499px;width:195px;height:141px;background:#fff;border-top:2px solid #000;border-left:2px solid #000;border-right:1px solid #e8e8e8;border-bottom:1px solid #e8e8e8"></div>
<svg style="left:280px;top:525px" width="103" height="88" viewBox="0 0 103 88">
<defs><radialGradient id="ps" gradientUnits="userSpaceOnUse" cx="72" cy="28" r="80" gradientTransform="translate(72 28) rotate(25) scale(1 0.75) translate(-72 -28)"><stop offset="0" stop-color="#e8ffff"/><stop offset="0.1" stop-color="#50f0ff"/><stop offset="0.3" stop-color="#14c0f0"/><stop offset="0.52" stop-color="#0890c2"/><stop offset="0.78" stop-color="#05638c"/><stop offset="1" stop-color="#044e70"/></radialGradient></defs>
<ellipse cx="51" cy="44" rx="50.5" ry="43" fill="url(#ps)"/>
</svg>
<div class="a" style="left:78px;top:657px;width:375px;height:7px;background:linear-gradient(#e8e2e8 83%,#f8f4f8 83%)"></div>
<div class="a" style="left:450px;top:265px;width:3px;height:392px;background:linear-gradient(90deg,#b0b0b0 33%,#f4eef4 33%)"></div>
<div class="a" style="left:183px;top:295px;width:353px;height:102px;background:#ffffe6;border:1px solid #000;border-right-width:2px"></div>
<div class="t" style="left:189px;top:302px;font-size:13px;letter-spacing:0.6px">Adjusts the shape and of the selected 3D object. You</div>
<div class="t" style="left:189px;top:317px;font-size:13px;letter-spacing:0.6px">can only modify the shape of a 3D object that was</div>
<div class="t" style="left:189px;top:332px;font-size:13px;letter-spacing:0.6px">created by converting a 2D object. To convert a 2D</div>
<div class="t" style="left:189px;top:347px;font-size:13px;letter-spacing:0.6px">object to 3D, select the object, right-click, and then</div>
<div class="t" style="left:189px;top:362px;font-size:13px;letter-spacing:0.6px">choose Convert - To 3D, or Convert - To 3D Rotation</div>
<div class="t" style="left:189px;top:377px;font-size:13px;letter-spacing:0.6px">Object.</div>
</div>

<!-- BOTTOM -->
<div id="bottom">
<div class="a" style="left:3px;top:964px;width:1273px;height:1px;background:#a0a0a0"></div>
<div class="a" style="left:3px;top:965px;width:1273px;height:1px;background:#fff"></div>
<div class="a" style="left:3px;top:993px;width:1273px;height:1px;background:#a0a0a0"></div>
<div class="a" style="left:3px;top:994px;width:1273px;height:1px;background:#fff"></div>
<div class="a" style="left:3px;top:966px;width:2px;height:52px;background:#222"></div>
<svg style="left:10px;top:973px" width="16" height="14" viewBox="0 0 16 14"><path d="M4 1.5h9M2.5 6L4 2M13 1.5L9 6L13 12M2 6v6h11" stroke="#000" fill="none"/><rect x="2.5" y="0.0" width="3" height="3" fill="#fff" stroke="#1a1aa0" stroke-width="1.2"/><rect x="11.5" y="0.0" width="3" height="3" fill="#fff" stroke="#1a1aa0" stroke-width="1.2"/><rect x="0.5" y="4.5" width="3" height="3" fill="#fff" stroke="#1a1aa0" stroke-width="1.2"/><rect x="7.5" y="4.5" width="3" height="3" fill="#fff" stroke="#1a1aa0" stroke-width="1.2"/><rect x="0.5" y="10.5" width="3" height="3" fill="#fff" stroke="#1a1aa0" stroke-width="1.2"/><rect x="11.5" y="10.5" width="3" height="3" fill="#fff" stroke="#1a1aa0" stroke-width="1.2"/></svg>
<svg style="left:35px;top:971px" width="15" height="17" viewBox="0 0 15 17"><path d="M1 16l2-4l8-10l3 3l-9 10z" fill="#ffff40" stroke="#000"/><path d="M3 12l3 3" stroke="#000"/><circle cx="1.5" cy="15.5" r="1" fill="#40c0e0"/></svg>
<div class="a" style="left:56px;top:969px;width:1px;height:22px;background:#a9a9a9"></div><div class="a" style="left:57px;top:969px;width:1px;height:22px;background:#fff"></div>
<svg style="left:64px;top:971px" width="17" height="17" viewBox="0 0 17 17"><path d="M2 6q0-4 4-4" stroke="#1a1aa0" stroke-width="1.5" fill="none"/><path d="M5 0l2 2l-2 2z" fill="#1a1aa0"/><rect x="3.5" y="4.5" width="3" height="3" fill="#fff" stroke="#1a1aa0"/><rect x="7" y="6" width="10" height="10" fill="#707070"/><rect x="7" y="5" width="10" height="2" fill="#000"/><path d="M11 9v6M13 10v5" stroke="#000"/><rect x="10" y="13" width="5" height="3" fill="#f0f020"/></svg>
<div class="a" style="left:87px;top:969px;width:1px;height:22px;background:#a9a9a9"></div><div class="a" style="left:88px;top:969px;width:1px;height:22px;background:#fff"></div>
<svg style="left:96px;top:973px" width="14" height="14" viewBox="0 0 14 14"><rect x="0" y="0" width="1" height="1" fill="#000"/><rect x="0" y="3" width="1" height="1" fill="#000"/><rect x="0" y="6" width="1" height="1" fill="#000"/><rect x="0" y="9" width="1" height="1" fill="#000"/><rect x="0" y="12" width="1" height="1" fill="#000"/><rect x="3" y="0" width="1" height="1" fill="#000"/><rect x="3" y="3" width="1" height="1" fill="#000"/><rect x="3" y="6" width="1" height="1" fill="#000"/><rect x="3" y="9" width="1" height="1" fill="#000"/><rect x="3" y="12" width="1" height="1" fill="#000"/><rect x="6" y="0" width="1" height="1" fill="#000"/><rect x="6" y="3" width="1" height="1" fill="#000"/><rect x="6" y="6" width="1" height="1" fill="#000"/><rect x="6" y="9" width="1" height="1" fill="#000"/><rect x="6" y="12" width="1" height="1" fill="#000"/><rect x="9" y="0" width="1" height="1" fill="#000"/><rect x="9" y="3" width="1" height="1" fill="#000"/><rect x="9" y="6" width="1" height="1" fill="#000"/><rect x="9" y="9" width="1" height="1" fill="#000"/><rect x="9" y="12" width="1" height="1" fill="#000"/><rect x="12" y="0" width="1" height="1" fill="#000"/><rect x="12" y="3" width="1" height="1" fill="#000"/><rect x="12" y="6" width="1" height="1" fill="#000"/><rect x="12" y="9" width="1" height="1" fill="#000"/><rect x="12" y="12" width="1" height="1" fill="#000"/></svg>
<div class="a" style="left:115px;top:968px;width:23px;height:23px;background:#bcd3e0;border:1px solid #2d6f9b"></div>
<svg style="left:118px;top:971px" width="18" height="18" viewBox="0 0 18 18"><path d="M6.5 0v18M0 11.5h18" stroke="#1a1aa0" stroke-dasharray="2 2"/></svg>
<svg style="left:141px;top:971px" width="17" height="17" viewBox="0 0 17 17"><path d="M3.5 0v17M13.5 0v17M0 3.5h17M0 13.5h17" stroke="#1a1aa0" stroke-dasharray="2 1.5"/><rect x="4" y="4" width="9" height="9" fill="#808080"/></svg>
<div class="a" style="left:164px;top:969px;width:1px;height:22px;background:#a9a9a9"></div><div class="a" style="left:165px;top:969px;width:1px;height:22px;background:#fff"></div>
<svg style="left:172px;top:971px" width="17" height="17" viewBox="0 0 17 17"><rect x="0" y="3" width="1" height="1" fill="#000"/><rect x="0" y="6" width="1" height="1" fill="#000"/><rect x="0" y="9" width="1" height="1" fill="#000"/><rect x="0" y="12" width="1" height="1" fill="#000"/><rect x="0" y="15" width="1" height="1" fill="#000"/><rect x="3" y="3" width="1" height="1" fill="#000"/><rect x="3" y="6" width="1" height="1" fill="#000"/><rect x="3" y="9" width="1" height="1" fill="#000"/><rect x="3" y="12" width="1" height="1" fill="#000"/><rect x="3" y="15" width="1" height="1" fill="#000"/><rect x="6" y="3" width="1" height="1" fill="#000"/><rect x="6" y="6" width="1" height="1" fill="#000"/><rect x="6" y="9" width="1" height="1" fill="#000"/><rect x="6" y="12" width="1" height="1" fill="#000"/><rect x="6" y="15" width="1" height="1" fill="#000"/><rect x="9" y="3" width="1" height="1" fill="#000"/><rect x="9" y="6" width="1" height="1" fill="#000"/><rect x="9" y="9" width="1" height="1" fill="#000"/><rect x="9" y="12" width="1" height="1" fill="#000"/><rect x="9" y="15" width="1" height="1" fill="#000"/><path d="M10.5 6v-2a3 3 0 0 1 6 0v2h-2v-2a1 1 0 0 0 -2 0v2z" fill="#900000"/><rect x="10.5" y="6" width="2" height="1.5" fill="#fff"/><rect x="14.5" y="6" width="2" height="1.5" fill="#fff"/></svg>
<div class="a" style="left:192px;top:968px;width:23px;height:23px;background:#bcd3e0;border:1px solid #2d6f9b"></div>
<svg style="left:195px;top:971px" width="18" height="18" viewBox="0 0 18 18"><path d="M6.5 0v18M0 11.5h18" stroke="#1a1aa0" stroke-dasharray="2 2"/><path d="M11.5 6v-2a3 3 0 0 1 6 0v2h-2v-2a1 1 0 0 0 -2 0v2z" fill="#900000"/><rect x="11.5" y="6" width="2" height="1.5" fill="#fff"/><rect x="15.5" y="6" width="2" height="1.5" fill="#fff"/></svg>
<div class="a" style="left:215px;top:968px;width:23px;height:23px;background:#bcd3e0;border:1px solid #2d6f9b"></div>
<svg style="left:218px;top:971px" width="18" height="18" viewBox="0 0 18 18"><path d="M1.5 2.5h6l3 3v11h-9z" fill="#fff" stroke="#000"/><path d="M11.5 6v-2a3 3 0 0 1 6 0v2h-2v-2a1 1 0 0 0 -2 0v2z" fill="#900000"/><rect x="11.5" y="6" width="2" height="1.5" fill="#fff"/><rect x="15.5" y="6" width="2" height="1.5" fill="#fff"/></svg>
<svg style="left:241px;top:971px" width="17" height="17" viewBox="0 0 17 17"><rect x="1.5" y="7.5" width="9" height="8" fill="#808080" stroke="#1a1aa0"/><path d="M10.5 6v-2a3 3 0 0 1 6 0v2h-2v-2a1 1 0 0 0 -2 0v2z" fill="#900000"/><rect x="10.5" y="6" width="2" height="1.5" fill="#fff"/><rect x="14.5" y="6" width="2" height="1.5" fill="#fff"/></svg>
<svg style="left:263px;top:971px" width="18" height="17" viewBox="0 0 18 17"><rect x="3" y="8" width="9" height="7" fill="#606060"/><rect x="2" y="7" width="3" height="3" fill="#1a1aa0"/><rect x="2" y="14" width="3" height="3" fill="#1a1aa0"/><rect x="11" y="7" width="3" height="3" fill="#1a1aa0"/><rect x="11" y="14" width="3" height="3" fill="#1a1aa0"/><path d="M11.5 6v-2a3 3 0 0 1 6 0v2h-2v-2a1 1 0 0 0 -2 0v2z" fill="#900000"/><rect x="11.5" y="6" width="2" height="1.5" fill="#fff"/><rect x="15.5" y="6" width="2" height="1.5" fill="#fff"/></svg>
<div class="a" style="left:287px;top:969px;width:1px;height:22px;background:#a9a9a9"></div><div class="a" style="left:288px;top:969px;width:1px;height:22px;background:#fff"></div>
<svg style="left:295px;top:971px" width="17" height="17" viewBox="0 0 17 17"><rect x="0.5" y="1.5" width="16" height="14" fill="#fff" stroke="#000" stroke-dasharray="1 1"/><text x="2" y="9" font-family="Liberation Sans" font-weight="bold" font-size="6.5" fill="#1a1aa0">ABC</text><path d="M2 12h3" stroke="#1a1aa0"/></svg>
<div class="a" style="left:315px;top:968px;width:23px;height:23px;background:#bcd3e0;border:1px solid #2d6f9b"></div>
<svg style="left:318px;top:971px" width="17" height="17" viewBox="0 0 17 17"><rect x="0.5" y="1.5" width="16" height="14" fill="#fff" stroke="#000" stroke-dasharray="1 1"/><text x="2" y="9" font-family="Liberation Sans" font-weight="bold" font-size="6.5" fill="#1a1aa0">ABC</text><path d="M2 12h3" stroke="#1a1aa0"/><path d="M9 8l5 5h-2l1 3l-1 .5l-1-3l-2 1z" fill="#fff" stroke="#000" stroke-width=".7"/></svg>
<div class="a" style="left:338px;top:968px;width:23px;height:23px;background:#bcd3e0;border:1px solid #2d6f9b"></div>
<svg style="left:341px;top:971px" width="17" height="17" viewBox="0 0 17 17"><rect x="0.5" y="1.5" width="16" height="14" fill="#fff" stroke="#000" stroke-dasharray="1 1"/><text x="2" y="9" font-family="Liberation Sans" font-weight="bold" font-size="6.5" fill="#1a1aa0">ABC</text><path d="M2 12h3" stroke="#1a1aa0"/><path d="M10 9v5h5v-3h-2v-1h-2v-1z" fill="#ffe080" stroke="#000" stroke-width=".7"/></svg>
<div class="a" style="left:364px;top:969px;width:1px;height:22px;background:#a9a9a9"></div><div class="a" style="left:365px;top:969px;width:1px;height:22px;background:#fff"></div>
<svg style="left:372px;top:973px" width="17" height="13" viewBox="0 0 17 13"><rect x="3" y="3" width="11" height="7" fill="#707070"/><rect x="1" y="1" width="3" height="3" fill="#000"/><rect x="1" y="9" width="3" height="3" fill="#000"/><rect x="13" y="1" width="3" height="3" fill="#000"/><rect x="13" y="9" width="3" height="3" fill="#000"/><path d="M2 4v5M15 4v5" stroke="#000" stroke-width="2"/></svg>
<svg style="left:396px;top:972px" width="16" height="15" viewBox="0 0 16 15"><rect x="3" y="4" width="10" height="8" fill="#707070"/><rect x="1" y="1" width="4" height="4" fill="#000"/><rect x="1" y="10" width="4" height="4" fill="#000"/><rect x="11" y="1" width="4" height="4" fill="#000"/><rect x="11" y="10" width="4" height="4" fill="#000"/></svg>
<svg style="left:418px;top:971px" width="17" height="17" viewBox="0 0 17 17"><path d="M2.5 1v15" stroke="#1a1aa0" stroke-width="2"/><path d="M3 16h4l9-12l-3-2z" fill="#fff" stroke="#000"/><path d="M6 12l3 3M8 9l3 3" stroke="#000"/><rect x="3" y="13" width="4" height="3" fill="#808080"/></svg>
<div class="a" style="left:441px;top:969px;width:1px;height:22px;background:#a9a9a9"></div><div class="a" style="left:442px;top:969px;width:1px;height:22px;background:#fff"></div>
<svg style="left:449px;top:972px" width="17" height="16" viewBox="0 0 17 16"><rect x="0.5" y="0.5" width="15" height="14" fill="#fff" stroke="#000" stroke-dasharray="1 1"/><path d="M4 6h7M4 10h7" stroke="#000"/><rect x="5" y="11" width="5" height="3" fill="#808080"/><path d="M1 1L16 16M16 1L1 16" stroke="#c00000" stroke-width="1.2"/></svg>
<svg style="left:472px;top:972px" width="17" height="16" viewBox="0 0 17 16"><rect x="1" y="1" width="2" height="2" fill="#000"/><rect x="1" y="5" width="2" height="2" fill="#000"/><rect x="1" y="9" width="2" height="2" fill="#000"/><rect x="1" y="13" width="2" height="2" fill="#000"/><rect x="3" y="3" width="2" height="2" fill="#000"/><rect x="3" y="7" width="2" height="2" fill="#000"/><rect x="3" y="11" width="2" height="2" fill="#000"/><rect x="5" y="1" width="2" height="2" fill="#000"/><rect x="5" y="5" width="2" height="2" fill="#000"/><rect x="5" y="9" width="2" height="2" fill="#000"/><rect x="5" y="13" width="2" height="2" fill="#000"/><rect x="7" y="3" width="2" height="2" fill="#000"/><rect x="7" y="7" width="2" height="2" fill="#000"/><rect x="7" y="11" width="2" height="2" fill="#000"/><rect x="9" y="1" width="2" height="2" fill="#000"/><rect x="9" y="5" width="2" height="2" fill="#000"/><rect x="9" y="9" width="2" height="2" fill="#000"/><rect x="9" y="13" width="2" height="2" fill="#000"/><rect x="11" y="3" width="2" height="2" fill="#000"/><rect x="11" y="7" width="2" height="2" fill="#000"/><rect x="11" y="11" width="2" height="2" fill="#000"/><rect x="13" y="1" width="2" height="2" fill="#000"/><rect x="13" y="5" width="2" height="2" fill="#000"/><rect x="13" y="9" width="2" height="2" fill="#000"/><rect x="13" y="13" width="2" height="2" fill="#000"/><rect x="15" y="3" width="2" height="2" fill="#000"/><rect x="15" y="7" width="2" height="2" fill="#000"/><rect x="15" y="11" width="2" height="2" fill="#000"/><rect x="1" y="1" width="15" height="14" fill="#808080" fill-opacity=".5"/><path d="M1 1L16 16M16 1L1 16" stroke="#c00000" stroke-width="1.2"/></svg>
<svg style="left:495px;top:972px" width="17" height="16" viewBox="0 0 17 16"><rect x="0.5" y="0.5" width="15" height="14" fill="#fff" stroke="#000" stroke-dasharray="1 1"/><text x="2" y="7" font-family="Liberation Sans" font-size="6" fill="#000">ABC</text><text x="2" y="13" font-family="Liberation Sans" font-size="6" fill="#000">XYZ</text><path d="M1 1L16 16M16 1L1 16" stroke="#c00000" stroke-width="1.2"/></svg>
<svg style="left:517px;top:972px" width="17" height="16" viewBox="0 0 17 16"><rect x="1" y="1" width="15" height="14" fill="#1a1aa0"/><rect x="3" y="3" width="2" height="2" fill="#d0d0d0"/><rect x="3" y="7" width="2" height="2" fill="#d0d0d0"/><rect x="3" y="11" width="2" height="2" fill="#d0d0d0"/><rect x="7" y="3" width="2" height="2" fill="#d0d0d0"/><rect x="7" y="7" width="2" height="2" fill="#d0d0d0"/><rect x="7" y="11" width="2" height="2" fill="#d0d0d0"/><rect x="11" y="3" width="2" height="2" fill="#d0d0d0"/><rect x="11" y="7" width="2" height="2" fill="#d0d0d0"/><rect x="11" y="11" width="2" height="2" fill="#d0d0d0"/><rect x="15" y="3" width="2" height="2" fill="#d0d0d0"/><rect x="15" y="7" width="2" height="2" fill="#d0d0d0"/><rect x="15" y="11" width="2" height="2" fill="#d0d0d0"/><path d="M1 1L16 16M16 1L1 16" stroke="#c00000" stroke-width="1.2"/></svg>
<div class="a" style="left:541px;top:969px;width:1px;height:22px;background:#a9a9a9"></div><div class="a" style="left:542px;top:969px;width:1px;height:22px;background:#fff"></div>
<svg style="left:549px;top:972px" width="17" height="15" viewBox="0 0 17 15"><path d="M1 3l4-2l4 4l-3 2z M6 7l4-2l5 5l-3 3z" fill="#909090"/><path d="M10 13h5v-5" stroke="#909090" stroke-width="2" fill="none"/></svg>
<div class="a" style="left:8px;top:997px;width:390px;height:18px;border-top:1px solid #a0a0a0;border-left:1px solid #a0a0a0;border-right:1px solid #fff;border-bottom:1px solid #fff"></div>
<div class="a" style="left:403px;top:997px;width:310px;height:18px;border-top:1px solid #a0a0a0;border-left:1px solid #a0a0a0;border-right:1px solid #fff;border-bottom:1px solid #fff"></div>
<div class="a" style="left:717px;top:997px;width:61px;height:18px;border-top:1px solid #a0a0a0;border-left:1px solid #a0a0a0;border-right:1px solid #fff;border-bottom:1px solid #fff"></div>
<div class="a" style="left:782px;top:997px;width:21px;height:18px;border-top:1px solid #a0a0a0;border-left:1px solid #a0a0a0;border-right:1px solid #fff;border-bottom:1px solid #fff"></div>
<div class="a" style="left:807px;top:997px;width:219px;height:18px;border-top:1px solid #a0a0a0;border-left:1px solid #a0a0a0;border-right:1px solid #fff;border-bottom:1px solid #fff"></div>
<div class="a" style="left:1030px;top:997px;width:241px;height:18px;border-top:1px solid #a0a0a0;border-left:1px solid #a0a0a0;border-right:1px solid #fff;border-bottom:1px solid #fff"></div>
<div class="t" style="left:9.6px;top:1000px;font-size:13px;letter-spacing:0.69px">3D scene selected</div>
<svg style="left:410px;top:999px" width="16" height="13" viewBox="0 0 16 13"><path d="M0 4.5h5M4.5 0v5" stroke="#1a1aa0"/><path d="M4.5 5.5h10v6h-10z" fill="none" stroke="#000" stroke-dasharray="1 1"/></svg>
<div class="t" style="left:430.6px;top:1000px;font-size:13px;letter-spacing:0.44px">3,98 / 5,84</div>
<svg style="left:564px;top:998px" width="15" height="15" viewBox="0 0 15 15"><path d="M3.5 3.5h10v10h-10z" fill="none" stroke="#000" stroke-dasharray="1 1"/><path d="M0.5 5v7M5 0.5h7" stroke="#000" stroke-dasharray="1 1"/></svg>
<div class="t" style="left:584.4px;top:1000px;font-size:13px;letter-spacing:0.8px">11,69 x 8,03</div>
<div class="t" style="left:734.4px;top:1000px;font-size:13px;letter-spacing:0.57px">68%</div>
<div class="t" style="left:789.4px;top:1000px;font-size:13px;letter-spacing:0.5px">*</div>
<div class="t" style="left:809.4px;top:1000px;font-size:13px;letter-spacing:0.2px">Slide 1 / 1</div>
<div class="t" style="left:1031.5px;top:1000px;font-size:13px;letter-spacing:0.49px">Default</div>
</div>
</body></html>
